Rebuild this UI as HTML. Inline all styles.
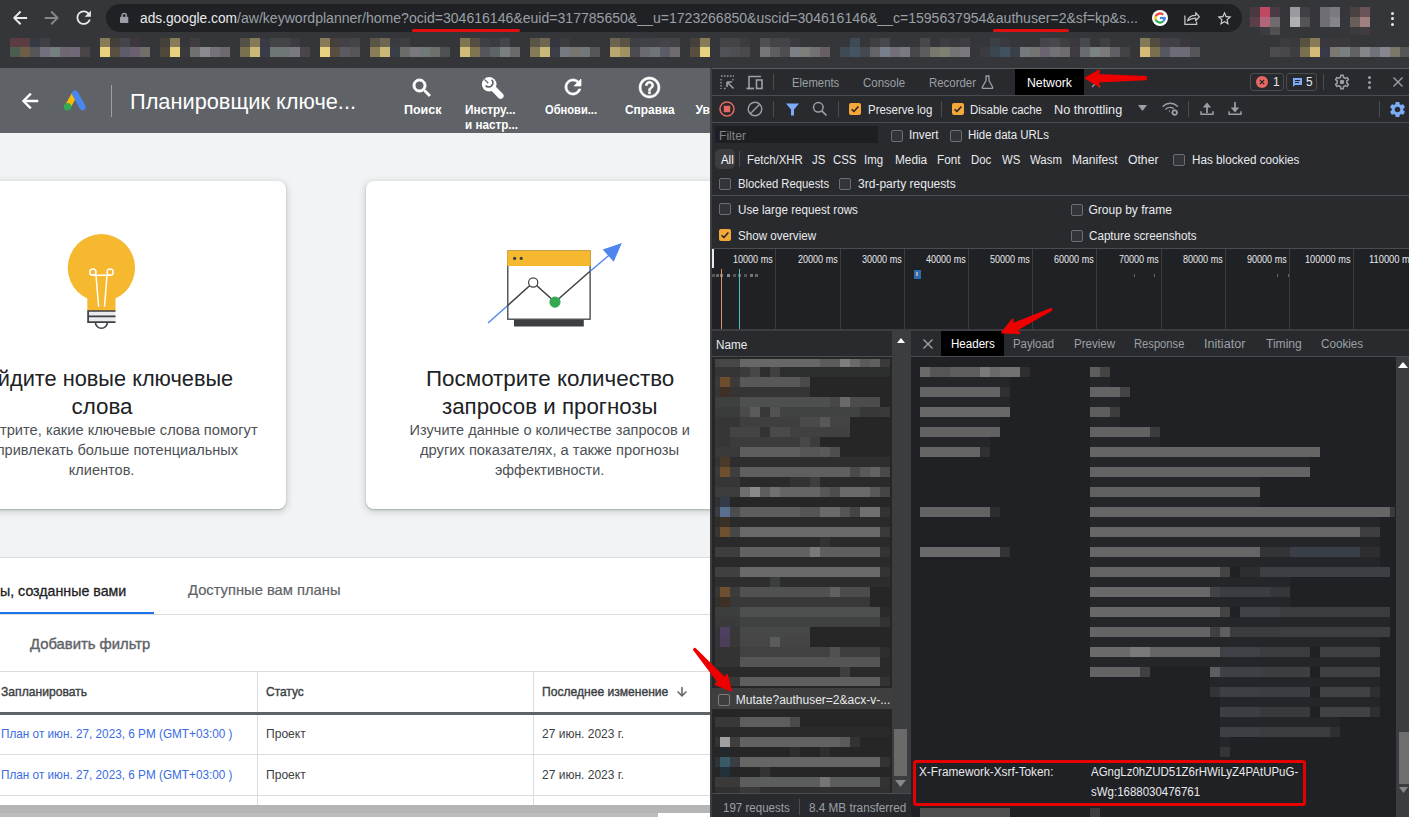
<!DOCTYPE html>
<html><head><meta charset="utf-8"><style>
*{margin:0;padding:0;box-sizing:border-box}
html,body{width:1409px;height:817px;overflow:hidden;background:#35363a;font-family:"Liberation Sans",sans-serif}
.a{position:absolute}
.t{position:absolute;white-space:nowrap;line-height:1;transform-origin:0 0}
</style></head><body>
<div class="a" style="left:0px;top:0px;width:1409px;height:68px;background:#35363a;"></div>
<div class="a" style="left:106px;top:4px;width:1136px;height:28px;background:#202124;border-radius:14px;"></div>
<svg class="a" style="left:12px;top:10px;" width="16" height="16" viewBox="0 0 16 16"><path d="M2.2 7.9H15.1M8.6 1.5L2.2 7.9L8.6 14.3" fill="none" stroke="#e8eaed" stroke-width="2" stroke-linejoin="round"/></svg>
<svg class="a" style="left:44px;top:10px;" width="16" height="16" viewBox="0 0 16 16"><path d="M0.7 7.9H13.6M7.2 1.5L13.6 7.9L7.2 14.3" fill="none" stroke="#85888b" stroke-width="2" stroke-linejoin="round"/></svg>
<svg class="a" style="left:73.4px;top:7.4px;" width="21.45" height="21.45" viewBox="0 0 24 24"><path fill="#e8eaed" d="M17.65 6.35C16.2 4.9 14.21 4 12 4c-4.42 0-7.99 3.58-7.99 8s3.57 8 7.99 8c3.73 0 6.84-2.55 7.73-6h-2.08c-.82 2.33-3.04 4-5.65 4-3.31 0-6-2.69-6-6s2.69-6 6-6c1.66 0 3.14.69 4.22 1.78L13 11h7V4l-2.35 2.35z"/></svg>
<svg class="a" style="left:120px;top:12px;" width="9" height="11" viewBox="0 0 9 11"><path d="M2 5.2V3.6a2.15 2.15 0 0 1 4.3 0V5.2" fill="none" stroke="#9aa0a6" stroke-width="1.5"/><rect x="0" y="4.8" width="8.3" height="6.2" rx="0.8" fill="#9aa0a6"/></svg>
<div class="t" style="left:140.00px;transform:scaleX(0.9813);top:11.10px;font-size:14px;color:#e8eaed;font-weight:normal;">ads.google.com</div>
<div class="t" style="left:237.00px;transform:scaleX(1.0043);top:11.10px;font-size:14px;color:#9aa0a6;font-weight:normal;">/aw/keywordplanner/home?ocid=304616146&amp;euid=317785650&amp;__u=1723266850&amp;uscid=304616146&amp;__c=1595637954&amp;authuser=2&amp;sf=kp&amp;s...</div>
<div class="a" style="left:412px;top:29px;width:108px;height:3px;background:#e01010;border-radius:1.5px;"></div>
<div class="a" style="left:993px;top:29px;width:76px;height:3px;background:#e01010;border-radius:1.5px;"></div>
<svg class="a" style="left:1152px;top:10px;" width="16" height="16" viewBox="0 0 16 16"><circle cx="8" cy="8" r="8" fill="#fff"/><g fill="none" stroke-width="2.3"><path d="M11.25 4.75A4.6 4.6 0 0 0 3.68 6.43" stroke="#ea4335"/><path d="M3.68 6.43A4.6 4.6 0 0 0 3.68 9.57" stroke="#fbbc05"/><path d="M3.68 9.57A4.6 4.6 0 0 0 11.25 11.25" stroke="#34a853"/><path d="M11.25 11.25A4.6 4.6 0 0 0 12.6 8" stroke="#4285f4"/><path d="M8 8H13.7" stroke="#4285f4"/></g></svg>
<svg class="a" style="left:1184px;top:9.5px;" width="16.2" height="15.3" viewBox="0 0 18 17"><path d="M1 6v10h13v-3" fill="none" stroke="#c4c7c5" stroke-width="1.4"/><path d="M4 12c1-4 4-6 9-6V3l4 4.5-4 4.5V9c-4 0-6.5 1-9 3z" fill="none" stroke="#c4c7c5" stroke-width="1.4" stroke-linejoin="round"/></svg>
<svg class="a" style="left:1215.6px;top:9.7px;" width="17" height="17" viewBox="0 0 24 24"><path fill="#d0d3d6" d="M22 9.24l-7.19-.62L12 2 9.19 8.63 2 9.24l5.46 4.73L5.82 21 12 17.27 18.18 21l-1.63-7.03L22 9.24zM12 15.4l-3.76 2.27 1-4.28-3.32-2.88 4.38-.38L12 6.1l1.71 4.04 4.38.38-3.32 2.88 1 4.28L12 15.4z"/></svg>
<div class="a" style="left:1250px;top:7px;width:10px;height:10px;background:#4a3a40;"></div>
<div class="a" style="left:1260px;top:7px;width:10px;height:10px;background:#c04862;"></div>
<div class="a" style="left:1270px;top:7px;width:10px;height:10px;background:#4a3a44;"></div>
<div class="a" style="left:1290px;top:7px;width:10px;height:10px;background:#9a9aa0;"></div>
<div class="a" style="left:1300px;top:7px;width:10px;height:10px;background:#404044;"></div>
<div class="a" style="left:1320px;top:7px;width:10px;height:10px;background:#6e6e74;"></div>
<div class="a" style="left:1330px;top:7px;width:10px;height:10px;background:#7a7a80;"></div>
<div class="a" style="left:1350px;top:7px;width:10px;height:10px;background:#4a4240;"></div>
<div class="a" style="left:1360px;top:7px;width:10px;height:10px;background:#6a5458;"></div>
<div class="a" style="left:1250px;top:17px;width:10px;height:10px;background:#5a3e48;"></div>
<div class="a" style="left:1260px;top:17px;width:10px;height:10px;background:#b06678;"></div>
<div class="a" style="left:1270px;top:17px;width:10px;height:10px;background:#706a6e;"></div>
<div class="a" style="left:1290px;top:17px;width:10px;height:10px;background:#b0b0b4;"></div>
<div class="a" style="left:1300px;top:17px;width:10px;height:10px;background:#545458;"></div>
<div class="a" style="left:1320px;top:17px;width:10px;height:10px;background:#6e6e74;"></div>
<div class="a" style="left:1330px;top:17px;width:10px;height:10px;background:#84848a;"></div>
<div class="a" style="left:1350px;top:17px;width:10px;height:10px;background:#6a5e5a;"></div>
<div class="a" style="left:1360px;top:17px;width:10px;height:10px;background:#a08080;"></div>
<div class="a" style="left:1260px;top:27px;width:10px;height:8px;background:#3c3c40;"></div>
<div class="a" style="left:1270px;top:27px;width:10px;height:8px;background:#505052;"></div>
<div class="a" style="left:1350px;top:27px;width:10px;height:8px;background:#3c3a3c;"></div>
<div class="a" style="left:1360px;top:27px;width:10px;height:8px;background:#403c40;"></div>
<div class="a" style="left:1390.5px;top:11.5px;width:3px;height:3px;background:#e8eaed;border-radius:50%;"></div>
<div class="a" style="left:1390.5px;top:17.0px;width:3px;height:3px;background:#e8eaed;border-radius:50%;"></div>
<div class="a" style="left:1390.5px;top:22.5px;width:3px;height:3px;background:#e8eaed;border-radius:50%;"></div>
<div class="a" style="left:10px;top:38px;width:10px;height:9px;background:#5a3c42;"></div>
<div class="a" style="left:20px;top:38px;width:10px;height:9px;background:#5a3c42;"></div>
<div class="a" style="left:30px;top:38px;width:10px;height:9px;background:#343a44;"></div>
<div class="a" style="left:40px;top:38px;width:10px;height:9px;background:#404044;"></div>
<div class="a" style="left:100px;top:38px;width:10px;height:9px;background:#887c58;"></div>
<div class="a" style="left:110px;top:38px;width:10px;height:9px;background:#443f38;"></div>
<div class="a" style="left:120px;top:38px;width:10px;height:9px;background:#44454a;"></div>
<div class="a" style="left:130px;top:38px;width:10px;height:9px;background:#3e383e;"></div>
<div class="a" style="left:160px;top:38px;width:10px;height:9px;background:#45413a;"></div>
<div class="a" style="left:170px;top:38px;width:10px;height:9px;background:#887c58;"></div>
<div class="a" style="left:190px;top:38px;width:10px;height:9px;background:#403d42;"></div>
<div class="a" style="left:240px;top:38px;width:10px;height:9px;background:#535045;"></div>
<div class="a" style="left:250px;top:38px;width:10px;height:9px;background:#857a58;"></div>
<div class="a" style="left:260px;top:38px;width:10px;height:9px;background:#383a44;"></div>
<div class="a" style="left:270px;top:38px;width:10px;height:9px;background:#434448;"></div>
<div class="a" style="left:280px;top:38px;width:10px;height:9px;background:#434448;"></div>
<div class="a" style="left:290px;top:38px;width:10px;height:9px;background:#3e3c40;"></div>
<div class="a" style="left:320px;top:38px;width:10px;height:9px;background:#887c58;"></div>
<div class="a" style="left:330px;top:38px;width:10px;height:9px;background:#45413a;"></div>
<div class="a" style="left:340px;top:38px;width:10px;height:9px;background:#404046;"></div>
<div class="a" style="left:350px;top:38px;width:10px;height:9px;background:#444448;"></div>
<div class="a" style="left:370px;top:38px;width:10px;height:9px;background:#5a5444;"></div>
<div class="a" style="left:380px;top:38px;width:10px;height:9px;background:#6e6650;"></div>
<div class="a" style="left:390px;top:38px;width:10px;height:9px;background:#3a3b40;"></div>
<div class="a" style="left:400px;top:38px;width:10px;height:9px;background:#3e3e40;"></div>
<div class="a" style="left:460px;top:38px;width:10px;height:9px;background:#807550;"></div>
<div class="a" style="left:470px;top:38px;width:10px;height:9px;background:#544e40;"></div>
<div class="a" style="left:480px;top:38px;width:10px;height:9px;background:#3e3f44;"></div>
<div class="a" style="left:490px;top:38px;width:10px;height:9px;background:#3a3b40;"></div>
<div class="a" style="left:500px;top:38px;width:10px;height:9px;background:#444549;"></div>
<div class="a" style="left:530px;top:38px;width:10px;height:9px;background:#5a5444;"></div>
<div class="a" style="left:540px;top:38px;width:10px;height:9px;background:#6e6650;"></div>
<div class="a" style="left:550px;top:38px;width:10px;height:9px;background:#35363f;"></div>
<div class="a" style="left:560px;top:38px;width:10px;height:9px;background:#3c3b40;"></div>
<div class="a" style="left:610px;top:38px;width:10px;height:9px;background:#6a6450;"></div>
<div class="a" style="left:620px;top:38px;width:10px;height:9px;background:#5a5444;"></div>
<div class="a" style="left:630px;top:38px;width:10px;height:9px;background:#3e3f44;"></div>
<div class="a" style="left:640px;top:38px;width:10px;height:9px;background:#404146;"></div>
<div class="a" style="left:650px;top:38px;width:10px;height:9px;background:#3e4146;"></div>
<div class="a" style="left:660px;top:38px;width:10px;height:9px;background:#444448;"></div>
<div class="a" style="left:670px;top:38px;width:10px;height:9px;background:#434346;"></div>
<div class="a" style="left:690px;top:38px;width:10px;height:9px;background:#45413a;"></div>
<div class="a" style="left:700px;top:38px;width:10px;height:9px;background:#887c58;"></div>
<div class="a" style="left:720px;top:38px;width:10px;height:9px;background:#444448;"></div>
<div class="a" style="left:730px;top:38px;width:10px;height:9px;background:#444448;"></div>
<div class="a" style="left:740px;top:38px;width:10px;height:9px;background:#3c3c3e;"></div>
<div class="a" style="left:760px;top:38px;width:10px;height:9px;background:#505054;"></div>
<div class="a" style="left:770px;top:38px;width:10px;height:9px;background:#444448;"></div>
<div class="a" style="left:780px;top:38px;width:10px;height:9px;background:#444448;"></div>
<div class="a" style="left:790px;top:38px;width:10px;height:9px;background:#3c3c40;"></div>
<div class="a" style="left:850px;top:38px;width:10px;height:9px;background:#3e4a54;"></div>
<div class="a" style="left:870px;top:38px;width:10px;height:9px;background:#404044;"></div>
<div class="a" style="left:880px;top:38px;width:10px;height:9px;background:#46484c;"></div>
<div class="a" style="left:920px;top:38px;width:10px;height:9px;background:#48484c;"></div>
<div class="a" style="left:940px;top:38px;width:10px;height:9px;background:#3e3e42;"></div>
<div class="a" style="left:950px;top:38px;width:10px;height:9px;background:#3a3a3e;"></div>
<div class="a" style="left:960px;top:38px;width:10px;height:9px;background:#3e3e42;"></div>
<div class="a" style="left:990px;top:38px;width:10px;height:9px;background:#3a4048;"></div>
<div class="a" style="left:1000px;top:38px;width:10px;height:9px;background:#383a40;"></div>
<div class="a" style="left:1040px;top:38px;width:10px;height:9px;background:#44444a;"></div>
<div class="a" style="left:1050px;top:38px;width:10px;height:9px;background:#48484c;"></div>
<div class="a" style="left:1060px;top:38px;width:10px;height:9px;background:#3e3e42;"></div>
<div class="a" style="left:1070px;top:38px;width:10px;height:9px;background:#3a383c;"></div>
<div class="a" style="left:1080px;top:38px;width:10px;height:9px;background:#48494e;"></div>
<div class="a" style="left:1100px;top:38px;width:10px;height:9px;background:#404044;"></div>
<div class="a" style="left:1140px;top:38px;width:10px;height:9px;background:#857a58;"></div>
<div class="a" style="left:1150px;top:38px;width:10px;height:9px;background:#524c40;"></div>
<div class="a" style="left:1160px;top:38px;width:10px;height:9px;background:#404046;"></div>
<div class="a" style="left:1170px;top:38px;width:10px;height:9px;background:#404046;"></div>
<div class="a" style="left:1180px;top:38px;width:10px;height:9px;background:#3a383c;"></div>
<div class="a" style="left:1280px;top:38px;width:10px;height:9px;background:#3c3c40;"></div>
<div class="a" style="left:1290px;top:38px;width:10px;height:9px;background:#3a3a3e;"></div>
<div class="a" style="left:1300px;top:38px;width:10px;height:9px;background:#58523f;"></div>
<div class="a" style="left:1310px;top:38px;width:10px;height:9px;background:#887c58;"></div>
<div class="a" style="left:1320px;top:38px;width:10px;height:9px;background:#38383e;"></div>
<div class="a" style="left:1330px;top:38px;width:10px;height:9px;background:#3a383c;"></div>
<div class="a" style="left:1340px;top:38px;width:10px;height:9px;background:#3a383c;"></div>
<div class="a" style="left:10px;top:47px;width:10px;height:10px;background:#4a5e50;"></div>
<div class="a" style="left:20px;top:47px;width:10px;height:10px;background:#6e5e46;"></div>
<div class="a" style="left:30px;top:47px;width:10px;height:10px;background:#555558;"></div>
<div class="a" style="left:40px;top:47px;width:10px;height:10px;background:#72707c;"></div>
<div class="a" style="left:50px;top:47px;width:10px;height:10px;background:#748080;"></div>
<div class="a" style="left:60px;top:47px;width:10px;height:10px;background:#6e6670;"></div>
<div class="a" style="left:70px;top:47px;width:10px;height:10px;background:#706878;"></div>
<div class="a" style="left:80px;top:47px;width:10px;height:10px;background:#4a4446;"></div>
<div class="a" style="left:100px;top:47px;width:10px;height:10px;background:#e8d282;"></div>
<div class="a" style="left:110px;top:47px;width:10px;height:10px;background:#5a5040;"></div>
<div class="a" style="left:120px;top:47px;width:10px;height:10px;background:#5c5c6a;"></div>
<div class="a" style="left:130px;top:47px;width:10px;height:10px;background:#6a6070;"></div>
<div class="a" style="left:140px;top:47px;width:10px;height:10px;background:#707068;"></div>
<div class="a" style="left:160px;top:47px;width:10px;height:10px;background:#504838;"></div>
<div class="a" style="left:170px;top:47px;width:10px;height:10px;background:#e8d282;"></div>
<div class="a" style="left:180px;top:47px;width:10px;height:10px;background:#3a3a3c;"></div>
<div class="a" style="left:190px;top:47px;width:10px;height:10px;background:#707070;"></div>
<div class="a" style="left:200px;top:47px;width:10px;height:10px;background:#8a8a90;"></div>
<div class="a" style="left:210px;top:47px;width:10px;height:10px;background:#757378;"></div>
<div class="a" style="left:220px;top:47px;width:10px;height:10px;background:#6c6a6e;"></div>
<div class="a" style="left:240px;top:47px;width:10px;height:10px;background:#7a7050;"></div>
<div class="a" style="left:250px;top:47px;width:10px;height:10px;background:#c9b878;"></div>
<div class="a" style="left:260px;top:47px;width:10px;height:10px;background:#3a3c4a;"></div>
<div class="a" style="left:270px;top:47px;width:10px;height:10px;background:#6e7678;"></div>
<div class="a" style="left:280px;top:47px;width:10px;height:10px;background:#6e7678;"></div>
<div class="a" style="left:290px;top:47px;width:10px;height:10px;background:#7c7880;"></div>
<div class="a" style="left:300px;top:47px;width:10px;height:10px;background:#48464a;"></div>
<div class="a" style="left:320px;top:47px;width:10px;height:10px;background:#e8d282;"></div>
<div class="a" style="left:330px;top:47px;width:10px;height:10px;background:#584e40;"></div>
<div class="a" style="left:340px;top:47px;width:10px;height:10px;background:#5a5a60;"></div>
<div class="a" style="left:350px;top:47px;width:10px;height:10px;background:#555558;"></div>
<div class="a" style="left:370px;top:47px;width:10px;height:10px;background:#8a7d58;"></div>
<div class="a" style="left:380px;top:47px;width:10px;height:10px;background:#c9b878;"></div>
<div class="a" style="left:390px;top:47px;width:10px;height:10px;background:#3a3e48;"></div>
<div class="a" style="left:400px;top:47px;width:10px;height:10px;background:#6c6b6a;"></div>
<div class="a" style="left:410px;top:47px;width:10px;height:10px;background:#78787e;"></div>
<div class="a" style="left:420px;top:47px;width:10px;height:10px;background:#707878;"></div>
<div class="a" style="left:430px;top:47px;width:10px;height:10px;background:#6e706e;"></div>
<div class="a" style="left:440px;top:47px;width:10px;height:10px;background:#4e5052;"></div>
<div class="a" style="left:460px;top:47px;width:10px;height:10px;background:#d0bc78;"></div>
<div class="a" style="left:470px;top:47px;width:10px;height:10px;background:#807450;"></div>
<div class="a" style="left:480px;top:47px;width:10px;height:10px;background:#55555a;"></div>
<div class="a" style="left:490px;top:47px;width:10px;height:10px;background:#5c6468;"></div>
<div class="a" style="left:500px;top:47px;width:10px;height:10px;background:#7a7e80;"></div>
<div class="a" style="left:510px;top:47px;width:10px;height:10px;background:#6a6a6a;"></div>
<div class="a" style="left:530px;top:47px;width:10px;height:10px;background:#857a58;"></div>
<div class="a" style="left:540px;top:47px;width:10px;height:10px;background:#c9b878;"></div>
<div class="a" style="left:550px;top:47px;width:10px;height:10px;background:#3c3f48;"></div>
<div class="a" style="left:560px;top:47px;width:10px;height:10px;background:#747a80;"></div>
<div class="a" style="left:570px;top:47px;width:10px;height:10px;background:#787470;"></div>
<div class="a" style="left:580px;top:47px;width:10px;height:10px;background:#70787a;"></div>
<div class="a" style="left:590px;top:47px;width:10px;height:10px;background:#555558;"></div>
<div class="a" style="left:610px;top:47px;width:10px;height:10px;background:#b8a870;"></div>
<div class="a" style="left:620px;top:47px;width:10px;height:10px;background:#a09260;"></div>
<div class="a" style="left:630px;top:47px;width:10px;height:10px;background:#4c4c50;"></div>
<div class="a" style="left:640px;top:47px;width:10px;height:10px;background:#6a6a70;"></div>
<div class="a" style="left:650px;top:47px;width:10px;height:10px;background:#6e7478;"></div>
<div class="a" style="left:660px;top:47px;width:10px;height:10px;background:#5c5c66;"></div>
<div class="a" style="left:670px;top:47px;width:10px;height:10px;background:#6e6c70;"></div>
<div class="a" style="left:690px;top:47px;width:10px;height:10px;background:#584e40;"></div>
<div class="a" style="left:700px;top:47px;width:10px;height:10px;background:#e8d282;"></div>
<div class="a" style="left:720px;top:47px;width:10px;height:10px;background:#505256;"></div>
<div class="a" style="left:730px;top:47px;width:10px;height:10px;background:#4c4e54;"></div>
<div class="a" style="left:740px;top:47px;width:10px;height:10px;background:#4a4a4c;"></div>
<div class="a" style="left:760px;top:47px;width:10px;height:10px;background:#76767a;"></div>
<div class="a" style="left:770px;top:47px;width:10px;height:10px;background:#5e5e62;"></div>
<div class="a" style="left:780px;top:47px;width:10px;height:10px;background:#4e4e52;"></div>
<div class="a" style="left:790px;top:47px;width:10px;height:10px;background:#7a8086;"></div>
<div class="a" style="left:800px;top:47px;width:10px;height:10px;background:#7e7e78;"></div>
<div class="a" style="left:810px;top:47px;width:10px;height:10px;background:#727276;"></div>
<div class="a" style="left:820px;top:47px;width:10px;height:10px;background:#6a5e66;"></div>
<div class="a" style="left:840px;top:47px;width:10px;height:10px;background:#3e4a54;"></div>
<div class="a" style="left:850px;top:47px;width:10px;height:10px;background:#445464;"></div>
<div class="a" style="left:860px;top:47px;width:10px;height:10px;background:#444a50;"></div>
<div class="a" style="left:870px;top:47px;width:10px;height:10px;background:#646466;"></div>
<div class="a" style="left:880px;top:47px;width:10px;height:10px;background:#76808a;"></div>
<div class="a" style="left:890px;top:47px;width:10px;height:10px;background:#746e7a;"></div>
<div class="a" style="left:900px;top:47px;width:10px;height:10px;background:#7a7880;"></div>
<div class="a" style="left:910px;top:47px;width:10px;height:10px;background:#48484c;"></div>
<div class="a" style="left:920px;top:47px;width:10px;height:10px;background:#5a5c60;"></div>
<div class="a" style="left:930px;top:47px;width:10px;height:10px;background:#78786c;"></div>
<div class="a" style="left:940px;top:47px;width:10px;height:10px;background:#808070;"></div>
<div class="a" style="left:950px;top:47px;width:10px;height:10px;background:#747474;"></div>
<div class="a" style="left:960px;top:47px;width:10px;height:10px;background:#78787e;"></div>
<div class="a" style="left:980px;top:47px;width:10px;height:10px;background:#3c3c40;"></div>
<div class="a" style="left:990px;top:47px;width:10px;height:10px;background:#3a4650;"></div>
<div class="a" style="left:1000px;top:47px;width:10px;height:10px;background:#405260;"></div>
<div class="a" style="left:1010px;top:47px;width:10px;height:10px;background:#3a4048;"></div>
<div class="a" style="left:1020px;top:47px;width:10px;height:10px;background:#747a7e;"></div>
<div class="a" style="left:1030px;top:47px;width:10px;height:10px;background:#747470;"></div>
<div class="a" style="left:1040px;top:47px;width:10px;height:10px;background:#6a6470;"></div>
<div class="a" style="left:1050px;top:47px;width:10px;height:10px;background:#727276;"></div>
<div class="a" style="left:1060px;top:47px;width:10px;height:10px;background:#6e6c70;"></div>
<div class="a" style="left:1070px;top:47px;width:10px;height:10px;background:#3e3c40;"></div>
<div class="a" style="left:1080px;top:47px;width:10px;height:10px;background:#686c70;"></div>
<div class="a" style="left:1090px;top:47px;width:10px;height:10px;background:#7a8282;"></div>
<div class="a" style="left:1100px;top:47px;width:10px;height:10px;background:#7a7a7a;"></div>
<div class="a" style="left:1110px;top:47px;width:10px;height:10px;background:#5e6064;"></div>
<div class="a" style="left:1120px;top:47px;width:10px;height:10px;background:#434246;"></div>
<div class="a" style="left:1140px;top:47px;width:10px;height:10px;background:#d4bc78;"></div>
<div class="a" style="left:1150px;top:47px;width:10px;height:10px;background:#7a7050;"></div>
<div class="a" style="left:1160px;top:47px;width:10px;height:10px;background:#545860;"></div>
<div class="a" style="left:1170px;top:47px;width:10px;height:10px;background:#6e6a78;"></div>
<div class="a" style="left:1180px;top:47px;width:10px;height:10px;background:#6e6a76;"></div>
<div class="a" style="left:1190px;top:47px;width:10px;height:10px;background:#555558;"></div>
<div class="a" style="left:1270px;top:47px;width:10px;height:10px;background:#4c4c50;"></div>
<div class="a" style="left:1280px;top:47px;width:10px;height:10px;background:#48484c;"></div>
<div class="a" style="left:1290px;top:47px;width:10px;height:10px;background:#3e3e42;"></div>
<div class="a" style="left:1300px;top:47px;width:10px;height:10px;background:#7a7050;"></div>
<div class="a" style="left:1310px;top:47px;width:10px;height:10px;background:#d4bc78;"></div>
<div class="a" style="left:1320px;top:47px;width:10px;height:10px;background:#383a48;"></div>
<div class="a" style="left:1330px;top:47px;width:10px;height:10px;background:#7a7a70;"></div>
<div class="a" style="left:1340px;top:47px;width:10px;height:10px;background:#788080;"></div>
<div class="a" style="left:1350px;top:47px;width:10px;height:10px;background:#626264;"></div>
<div class="a" style="left:1360px;top:47px;width:10px;height:10px;background:#848688;"></div>
<div class="a" style="left:1370px;top:47px;width:10px;height:10px;background:#70747a;"></div>
<div class="a" style="left:1380px;top:47px;width:10px;height:10px;background:#88868e;"></div>
<div class="a" style="left:1390px;top:47px;width:10px;height:10px;background:#7a7868;"></div>
<div class="a" style="left:1400px;top:47px;width:10px;height:10px;background:#555558;"></div>
<div class="a" style="left:0px;top:68px;width:711px;height:749px;background:#f1f3f4;"></div>
<div class="a" style="left:0px;top:68px;width:711px;height:65px;background:#5f6368;"></div>
<svg class="a" style="left:18px;top:89px;" width="24" height="24" viewBox="0 0 24 24"><path fill="#fff" stroke="#fff" stroke-width="0.5" d="M20 11H7.83l5.59-5.59L12 4l-8 8 8 8 1.41-1.41L7.83 13H20v-2z"/></svg>
<svg class="a" style="left:55px;top:82px;" width="40" height="36" viewBox="0 0 40 36"><path d="M12.55 24.75 L20.1 11.6" stroke="#fbbc04" stroke-width="6"/><path d="M20.1 11.6 L27.6 25.1" stroke="#4a86ee" stroke-width="6.3" stroke-linecap="round"/><circle cx="12.55" cy="24.75" r="3.7" fill="#34a853"/></svg>
<div class="a" style="left:111px;top:85px;width:1px;height:32px;background:#9aa0a6;"></div>
<div class="t" style="left:129.50px;transform:scaleX(0.9896);top:90.50px;font-size:22px;color:#ffffff;font-weight:normal;">Планировщик ключе...</div>
<svg class="a" style="left:410px;top:76px;" width="24" height="24" viewBox="0 0 24 24"><path fill="#fff" stroke="#fff" stroke-width="0.9" d="M15.5 14h-.79l-.28-.27C15.41 12.59 16 11.11 16 9.5 16 5.91 13.09 3 9.5 3S3 5.91 3 9.5 5.91 16 9.5 16c1.61 0 3.09-.59 4.23-1.57l.27.28v.79l5 4.99L20.49 19l-4.99-5zm-6 0C7.01 14 5 11.99 5 9.5S7.01 5 9.5 5 14 7.01 14 9.5 11.99 14 9.5 14z"/></svg>
<div class="t" style="left:403.50px;transform:scaleX(1.0412);top:103.80px;font-size:12px;color:#ffffff;font-weight:bold;">Поиск</div>
<svg class="a" style="left:470px;top:70.8px;" width="50" height="32" viewBox="0 0 50 32"><circle cx="19.2" cy="13.3" r="7.3" fill="#fff"/><path d="M19 13L30.6 24.8" stroke="#fff" stroke-width="6" stroke-linecap="round"/><path d="M14.4 8.4L18.3 12.3" stroke="#5f6368" stroke-width="1.3"/><path d="M15.6 14.6A4.2 4.2 0 0 0 21.8 8.8" fill="none" stroke="#5f6368" stroke-width="1.7"/></svg>
<div class="t" style="left:464.50px;transform:scaleX(0.9860);top:103.80px;font-size:12px;color:#ffffff;font-weight:bold;">Инстру...</div>
<div class="t" style="left:464.50px;transform:scaleX(0.9722);top:118.80px;font-size:12px;color:#ffffff;font-weight:bold;">и настр...</div>
<svg class="a" style="left:561px;top:75px;" width="24" height="24" viewBox="0 0 24 24"><path fill="#fff" stroke="#fff" stroke-width="0.7" d="M17.65 6.35C16.2 4.9 14.21 4 12 4c-4.42 0-7.99 3.58-7.99 8s3.57 8 7.99 8c3.73 0 6.84-2.55 7.73-6h-2.08c-.82 2.33-3.04 4-5.65 4-3.31 0-6-2.69-6-6s2.69-6 6-6c1.66 0 3.14.69 4.22 1.78L13 11h7V4l-2.35 2.35z"/></svg>
<div class="t" style="left:545.00px;transform:scaleX(0.9270);top:103.80px;font-size:12px;color:#ffffff;font-weight:bold;">Обнови...</div>
<svg class="a" style="left:637px;top:75px;" width="25" height="25" viewBox="0 0 24 24"><path fill="#fff" stroke="#fff" stroke-width="0.6" d="M11 18h2v-2h-2v2zm1-16C6.48 2 2 6.48 2 12s4.48 10 10 10 10-4.48 10-10S17.52 2 12 2zm0 18c-4.41 0-8-3.59-8-8s3.59-8 8-8 8 3.59 8 8-3.59 8-8 8zm0-14c-2.21 0-4 1.79-4 4h2c0-1.1.9-2 2-2s2 .9 2 2c0 2-3 1.75-3 5h2c0-2.25 3-2.5 3-5 0-2.21-1.79-4-4-4z"/></svg>
<div class="t" style="left:624.50px;transform:scaleX(0.9903);top:103.80px;font-size:12px;color:#ffffff;font-weight:bold;">Справка</div>
<div class="t" style="left:695.5px;top:103.80px;font-size:12px;color:#ffffff;font-weight:bold;">Ув</div>
<div class="a" style="left:-30px;top:181px;width:316px;height:328px;background:#fff;border-radius:8px;box-shadow:0 1px 2px 0 rgba(60,64,67,.3),0 2px 6px 2px rgba(60,64,67,.15);"></div>
<div class="a" style="left:366px;top:181px;width:400px;height:328px;background:#fff;border-radius:8px;box-shadow:0 1px 2px 0 rgba(60,64,67,.3),0 2px 6px 2px rgba(60,64,67,.15);"></div>
<svg class="a" style="left:61px;top:228px;" width="82" height="102" viewBox="0 0 82 102"><circle cx="40.4" cy="39.8" r="33.7" fill="#f5b82e"/><rect x="26.3" y="62" width="28.2" height="21" fill="#f5b82e"/><path d="M34.4 94.3a6 6 0 0 0 12 0" fill="none" stroke="#3c4043" stroke-width="1.6"/><rect x="27.1" y="83" width="27.4" height="10.5" fill="#e8eaed"/><path d="M27.1 82.4V94.1H54.5M26.3 83H54.5M27.1 88.3H54.5" fill="none" stroke="#3c4043" stroke-width="1.7"/><g fill="none" stroke="#fff" stroke-width="1.5"><circle cx="31.9" cy="44.2" r="3.1"/><circle cx="49.1" cy="44.2" r="3.1"/><path d="M31.9 47.3H49.1M35 47.3L37.6 78.8M46 47.3L43.5 78.8"/></g></svg>
<svg class="a" style="left:480px;top:236px;" width="150" height="100" viewBox="0 0 150 100"><path d="M8 87.1L27.5 69.7" stroke="#4f86ee" stroke-width="1.4"/><path d="M141.9 7.1L122.7 13.5L133.7 25.7Z" fill="#4f86ee"/><rect x="27.8" y="15" width="82.3" height="68.2" fill="#fff" stroke="#3c4043" stroke-width="1.3"/><rect x="27.2" y="14.4" width="83.5" height="15.6" fill="#f5b82e"/><circle cx="34.6" cy="22.4" r="1.6" fill="#3c4043"/><circle cx="41.2" cy="22.4" r="1.6" fill="#3c4043"/><rect x="34" y="83.8" width="69.8" height="6.7" fill="#3c4043"/><path d="M27.5 69.7L53.2 46.5L75 66.1L110 35.3" fill="none" stroke="#3c4043" stroke-width="1.4"/><path d="M110.2 35.3L129 19.2" stroke="#4f86ee" stroke-width="1.4"/><circle cx="53.2" cy="46.5" r="4.6" fill="#fff" stroke="#3c4043" stroke-width="1.2"/><circle cx="75" cy="66.1" r="5.6" fill="#34a853"/></svg>
<div class="t" style="left:-29.60px;transform:scaleX(0.9718);top:367.56px;font-size:22.4px;color:#202124;font-weight:normal;">Найдите новые ключевые</div>
<div class="t" style="left:71.47px;top:395.86px;font-size:22.4px;color:#202124;font-weight:normal;">слова</div>
<div class="t" style="left:0.00px;transform:scaleX(1.0080);top:423.23px;font-size:14.55px;color:#4d5156;font-weight:normal;">трите, какие ключевые слова помогут</div>
<div class="t" style="left:-3.34px;top:443.43px;font-size:14.55px;color:#4d5156;font-weight:normal;">привлекать больше потенциальных</div>
<div class="t" style="left:68.79px;top:462.63px;font-size:14.55px;color:#4d5156;font-weight:normal;">клиентов.</div>
<div class="t" style="left:426.00px;top:367.56px;font-size:22.4px;color:#202124;font-weight:normal;">Посмотрите количество</div>
<div class="t" style="left:442.00px;transform:scaleX(0.9953);top:395.86px;font-size:22.4px;color:#202124;font-weight:normal;">запросов и прогнозы</div>
<div class="t" style="left:409.60px;top:423.23px;font-size:14.55px;color:#4d5156;font-weight:normal;">Изучите данные о количестве запросов и</div>
<div class="t" style="left:420.20px;transform:scaleX(1.0094);top:443.43px;font-size:14.55px;color:#4d5156;font-weight:normal;">других показателях, а также прогнозы</div>
<div class="t" style="left:495.20px;transform:scaleX(0.9861);top:462.63px;font-size:14.55px;color:#4d5156;font-weight:normal;">эффективности.</div>
<div class="a" style="left:0px;top:557px;width:711px;height:260px;background:#fff;"></div>
<div class="a" style="left:0px;top:557px;width:711px;height:1px;background:#dadce0;"></div>
<div class="t" style="left:0.00px;transform:scaleX(0.9475);top:582.75px;font-size:15px;color:#202124;font-weight:normal;-webkit-text-stroke:0.3px #202124;">ы, созданные вами</div>
<div class="t" style="left:187.80px;transform:scaleX(1.0157);top:583.17px;font-size:14.5px;color:#5f6368;font-weight:normal;-webkit-text-stroke:0.2px #5f6368;">Доступные вам планы</div>
<div class="a" style="left:0px;top:614px;width:711px;height:1px;background:#dadce0;"></div>
<div class="a" style="left:0px;top:612px;width:154px;height:2px;background:#1a73e8;"></div>
<div class="t" style="left:29.90px;transform:scaleX(0.9877);top:635.95px;font-size:15px;color:#5f6368;font-weight:normal;-webkit-text-stroke:0.4px #5f6368;">Добавить фильтр</div>
<div class="a" style="left:0px;top:671px;width:711px;height:1px;background:#dadce0;"></div>
<div class="t" style="left:0.80px;transform:scaleX(0.9330);top:685.45px;font-size:13px;color:#3c4043;font-weight:normal;-webkit-text-stroke:0.4px #3c4043;">Запланировать</div>
<div class="t" style="left:266.20px;transform:scaleX(0.9195);top:685.45px;font-size:13px;color:#3c4043;font-weight:normal;-webkit-text-stroke:0.4px #3c4043;">Статус</div>
<div class="t" style="left:542.20px;transform:scaleX(0.9292);top:685.45px;font-size:13px;color:#3c4043;font-weight:normal;-webkit-text-stroke:0.4px #3c4043;">Последнее изменение</div>
<svg class="a" style="left:675px;top:685px;" width="14" height="14" viewBox="0 0 24 24"><path fill="#5f6368" stroke="#5f6368" stroke-width="0.8" d="M20 12l-1.41-1.41L13 16.17V4h-2v12.17l-5.58-5.59L4 12l8 8 8-8z"/></svg>
<div class="a" style="left:257px;top:672px;width:1px;height:133px;background:#dadce0;"></div>
<div class="a" style="left:533px;top:672px;width:1px;height:133px;background:#dadce0;"></div>
<div class="a" style="left:0px;top:712px;width:711px;height:2.5px;background:#5f6368;"></div>
<div class="t" style="left:0.80px;transform:scaleX(0.9045);top:727.35px;font-size:13px;color:#3a6ddf;font-weight:normal;">План от июн. 27, 2023, 6 PM (GMT+03:00 )</div>
<div class="t" style="left:266.20px;transform:scaleX(0.9293);top:727.35px;font-size:13px;color:#3c4043;font-weight:normal;">Проект</div>
<div class="t" style="left:542.20px;transform:scaleX(0.9235);top:727.35px;font-size:13px;color:#3c4043;font-weight:normal;">27 июн. 2023 г.</div>
<div class="a" style="left:0px;top:754px;width:711px;height:1px;background:#dadce0;"></div>
<div class="t" style="left:0.80px;transform:scaleX(0.9045);top:768.25px;font-size:13px;color:#3a6ddf;font-weight:normal;">План от июн. 27, 2023, 6 PM (GMT+03:00 )</div>
<div class="t" style="left:266.20px;transform:scaleX(0.9293);top:768.25px;font-size:13px;color:#3c4043;font-weight:normal;">Проект</div>
<div class="t" style="left:542.20px;transform:scaleX(0.9235);top:768.25px;font-size:13px;color:#3c4043;font-weight:normal;">27 июн. 2023 г.</div>
<div class="a" style="left:0px;top:795px;width:711px;height:1px;background:#dadce0;"></div>
<div class="a" style="left:0px;top:805px;width:711px;height:8px;background:#b4b5b7;"></div>
<div class="a" style="left:0px;top:813px;width:658px;height:4px;background:#bdbdbd;"></div>
<div class="a" style="left:658px;top:813px;width:53px;height:4px;background:#ffffff;"></div>
<div class="a" style="left:711px;top:68px;width:698px;height:749px;background:#202124;"></div>
<div class="a" style="left:710px;top:68px;width:2px;height:749px;background:#3c3e42;"></div>
<div class="a" style="left:712px;top:68px;width:697px;height:1px;background:#5a5d61;"></div>
<div class="a" style="left:712px;top:69px;width:697px;height:26px;background:#292a2d;"></div>
<div class="a" style="left:712px;top:95px;width:697px;height:1px;background:#494c50;"></div>
<svg class="a" style="left:720px;top:75px;" width="16" height="15" viewBox="0 0 16 15"><path d="M1 1h1.5M4 1h1.5M7 1h1.5M10 1h1.5M13 1h1M1 4v1.5M1 7v1.5M1 10v1.5M1 13v1M4 13.5h1.5M13 4v1.5" stroke="#9aa0a6" stroke-width="1.3"/><path d="M7 7L13.5 13.5M7 7h5M7 7v5" stroke="#9aa0a6" stroke-width="1.6" fill="none"/></svg>
<svg class="a" style="left:746px;top:75px;" width="18" height="15" viewBox="0 0 18 15"><path d="M3 13.5V1.5H15" fill="none" stroke="#9aa0a6" stroke-width="1.6"/><path d="M0.5 13.5H8" stroke="#9aa0a6" stroke-width="1.8"/><rect x="10.5" y="5" width="5.5" height="8.5" fill="none" stroke="#9aa0a6" stroke-width="1.6"/></svg>
<div class="a" style="left:773px;top:74px;width:1px;height:16px;background:#494c50;"></div>
<div class="t" style="left:791.90px;transform:scaleX(0.9454);top:76.80px;font-size:12px;color:#9aa0a6;font-weight:normal;">Elements</div>
<div class="t" style="left:862.60px;transform:scaleX(0.9561);top:76.80px;font-size:12px;color:#9aa0a6;font-weight:normal;">Console</div>
<div class="t" style="left:928.60px;transform:scaleX(0.9522);top:76.80px;font-size:12px;color:#9aa0a6;font-weight:normal;">Recorder</div>
<svg class="a" style="left:981px;top:75px;" width="13" height="14" viewBox="0 0 13 14"><path d="M4.5 1h4M5 1.5v4L1.3 12.2a.9.9 0 0 0 .8 1.3h8.8a.9.9 0 0 0 .8-1.3L8 5.5v-4" fill="none" stroke="#9aa0a6" stroke-width="1.3"/></svg>
<div class="a" style="left:1015px;top:69px;width:69px;height:26px;background:#000;"></div>
<div class="t" style="left:1026.70px;transform:scaleX(1.0224);top:76.80px;font-size:12px;color:#fff;font-weight:normal;">Network</div>
<svg class="a" style="left:1090px;top:77px;" width="12" height="12" viewBox="0 0 12 12"><path d="M2 10L10 2M2 2L10 10" stroke="#9aa0a6" stroke-width="1.3"/></svg>
<div class="a" style="left:1250px;top:73px;width:34px;height:18px;background:transparent;border:1px solid #4a4c50;border-radius:3px;"></div>
<svg class="a" style="left:1256px;top:76px;" width="12" height="12" viewBox="0 0 12 12"><circle cx="6" cy="6" r="6" fill="#e46962"/><path d="M3.8 3.8L8.2 8.2M8.2 3.8L3.8 8.2" stroke="#202124" stroke-width="1.2"/></svg>
<div class="t" style="left:1273.00px;transform:scaleX(0.9500);top:76.17px;font-size:12.5px;color:#e8eaed;font-weight:normal;">1</div>
<div class="a" style="left:1286px;top:73px;width:31px;height:18px;background:transparent;border:1px solid #4a4c50;border-radius:3px;"></div>
<svg class="a" style="left:1291.5px;top:76.5px;" width="11" height="11" viewBox="0 0 11 11"><path d="M1 1h9v7H3L1 10z" fill="#7cacf8"/><path d="M3 3.5h5M3 5.5h4" stroke="#202124" stroke-width="1"/></svg>
<div class="t" style="left:1305.50px;transform:scaleX(0.9500);top:76.17px;font-size:12.5px;color:#e8eaed;font-weight:normal;">5</div>
<div class="a" style="left:1323px;top:74px;width:1px;height:16px;background:#494c50;"></div>
<svg class="a" style="left:1333px;top:73px;" width="18" height="18" viewBox="0 0 24 24"><path fill="#9aa0a6" d="M19.43 12.98c.04-.32.07-.64.07-.98 0-.34-.03-.66-.07-.98l2.11-1.65c.19-.15.24-.42.12-.64l-2-3.46a.5.5 0 0 0-.61-.22l-2.49 1c-.52-.4-1.080-.73-1.69-.98l-.38-2.65A.488.488 0 0 0 14 2h-4c-.25 0-.46.18-.49.42l-.38 2.65c-.61.25-1.17.59-1.69.98l-2.49-1a.566.566 0 0 0-.18-.03c-.17 0-.34.09-.43.25l-2 3.46c-.13.22-.07.49.12.64l2.11 1.65c-.04.32-.07.65-.07.98 0 .33.03.66.07.98l-2.11 1.65c-.19.15-.24.42-.12.64l2 3.46a.5.5 0 0 0 .61.22l2.49-1c.52.4 1.08.73 1.69.98l.38 2.65c.03.24.24.42.49.42h4c.25 0 .46-.18.49-.42l.38-2.650c.61-.25 1.17-.59 1.69-.98l2.49 1c.06.02.12.03.18.03.17 0 .34-.09.43-.25l2-3.46c.12-.22.07-.49-.12-.64l-2.11-1.65zm-1.98-1.71c.04.31.05.52.05.73 0 .21-.02.43-.05.73l-.14 1.13.89.7 1.08.84-.7 1.21-1.27-.51-1.04-.42-.9.68c-.43.32-.84.56-1.25.73l-1.06.43-.16 1.13-.2 1.35h-1.4l-.19-1.35-.16-1.13-1.06-.43c-.43-.18-.83-.41-1.23-.71l-.91-.7-1.06.43-1.27.51-.7-1.21 1.08-.84.89-.7-.14-1.13c-.03-.31-.05-.54-.05-.74s.02-.43.05-.73l.14-1.13-.89-.7-1.08-.84.7-1.21 1.27.51 1.04.42.9-.68c.43-.32.84-.56 1.25-.73l1.06-.43.16-1.13.2-1.35h1.39l.19 1.35.16 1.13 1.06.43c.43.18.83.41 1.23.71l.91.7 1.06-.43 1.27-.51.7 1.21-1.07.85-.89.7.14 1.13z"/><circle cx="12" cy="12" r="3" fill="#9aa0a6"/></svg>
<div class="a" style="left:1368.3px;top:75.9px;width:3px;height:3px;background:#9aa0a6;border-radius:50%;"></div>
<div class="a" style="left:1368.3px;top:80.7px;width:3px;height:3px;background:#9aa0a6;border-radius:50%;"></div>
<div class="a" style="left:1368.3px;top:85.5px;width:3px;height:3px;background:#9aa0a6;border-radius:50%;"></div>
<svg class="a" style="left:1392px;top:76px;" width="12" height="12" viewBox="0 0 12 12"><path d="M1.5 10.5L10.5 1.5M1.5 1.5L10.5 10.5" stroke="#9aa0a6" stroke-width="1.4"/></svg>
<div class="a" style="left:712px;top:96px;width:697px;height:26px;background:#292a2d;"></div>
<div class="a" style="left:712px;top:122px;width:697px;height:1px;background:#494c50;"></div>
<svg class="a" style="left:719px;top:101px;" width="16" height="16" viewBox="0 0 16 16"><circle cx="8" cy="8" r="7" fill="none" stroke="#e46962" stroke-width="1.5"/><rect x="4.8" y="4.8" width="6.4" height="6.4" fill="#e46962"/></svg>
<svg class="a" style="left:747px;top:101px;" width="16" height="16" viewBox="0 0 16 16"><circle cx="8" cy="8" r="6.8" fill="none" stroke="#9aa0a6" stroke-width="1.4"/><path d="M3.3 12.7L12.7 3.3" stroke="#9aa0a6" stroke-width="1.4"/></svg>
<div class="a" style="left:773px;top:101px;width:1px;height:16px;background:#494c50;"></div>
<svg class="a" style="left:786px;top:103px;" width="13" height="13" viewBox="0 0 13 13"><path d="M0 0.5h13L8 6.5v6H5v-6z" fill="#7cacf8"/></svg>
<svg class="a" style="left:812px;top:101px;" width="16" height="16" viewBox="0 0 16 16"><circle cx="6.3" cy="6.3" r="4.8" fill="none" stroke="#9aa0a6" stroke-width="1.5"/><path d="M9.8 9.8L14.5 14.5" stroke="#9aa0a6" stroke-width="1.7"/></svg>
<div class="a" style="left:838px;top:101px;width:1px;height:16px;background:#494c50;"></div>
<svg class="a" style="left:849px;top:102.8px" width="12" height="12" viewBox="0 0 12 12"><rect x="0" y="0" width="12" height="12" rx="2" fill="#f5a83a"/><path d="M2.6 6.2L4.9 8.5L9.4 3.4" fill="none" stroke="#202124" stroke-width="1.5"/></svg>
<div class="t" style="left:867.50px;transform:scaleX(0.9544);top:104.10px;font-size:12px;color:#e8eaed;font-weight:normal;">Preserve log</div>
<div class="a" style="left:941px;top:101px;width:1px;height:16px;background:#494c50;"></div>
<svg class="a" style="left:952px;top:102.8px" width="12" height="12" viewBox="0 0 12 12"><rect x="0" y="0" width="12" height="12" rx="2" fill="#f5a83a"/><path d="M2.6 6.2L4.9 8.5L9.4 3.4" fill="none" stroke="#202124" stroke-width="1.5"/></svg>
<div class="t" style="left:970.30px;transform:scaleX(0.9552);top:104.10px;font-size:12px;color:#e8eaed;font-weight:normal;">Disable cache</div>
<div class="t" style="left:1053.70px;transform:scaleX(1.0540);top:104.10px;font-size:12px;color:#e8eaed;font-weight:normal;">No throttling</div>
<svg class="a" style="left:1138px;top:105px;" width="9" height="6" viewBox="0 0 9 6"><path d="M0 0h9L4.5 6z" fill="#9aa0a6"/></svg>
<svg class="a" style="left:1162px;top:101px;" width="17" height="16" viewBox="0 0 17 16"><path d="M1 5.2a10.5 10.5 0 0 1 14.5 0M3.8 8a6.5 6.5 0 0 1 7.5 -.6" fill="none" stroke="#9aa0a6" stroke-width="1.4" stroke-linecap="round"/><path d="M6.5 9.8l1.5 1.5-.2-2z" fill="#9aa0a6"/><circle cx="12.7" cy="11.6" r="2.2" fill="none" stroke="#9aa0a6" stroke-width="1.6"/><path d="M12.7 8.3v1.2M12.7 13.7v1.2M9.4 11.6h1.2M14.8 11.6h1.2M10.4 9.3l.8.8M14.2 13.1l.8.8M10.4 13.9l.8-.8M14.2 10.1l.8-.8" stroke="#9aa0a6" stroke-width="1.1"/></svg>
<div class="a" style="left:1188px;top:101px;width:1px;height:16px;background:#494c50;"></div>
<svg class="a" style="left:1200px;top:101px;" width="14" height="15" viewBox="0 0 14 15"><path d="M7 12V5.5" stroke="#9aa0a6" stroke-width="1.7"/><path d="M2.8 6.6L7 1.6L11.2 6.6Z" fill="#9aa0a6"/><path d="M1 10.3V13.3H13V10.3" fill="none" stroke="#9aa0a6" stroke-width="1.5" stroke-linejoin="round"/></svg>
<svg class="a" style="left:1228px;top:101px;" width="14" height="15" viewBox="0 0 14 15"><path d="M7 1V7.5" stroke="#9aa0a6" stroke-width="1.7"/><path d="M2.8 6.4L7 11.4L11.2 6.4Z" fill="#9aa0a6"/><path d="M1 10.3V13.3H13V10.3" fill="none" stroke="#9aa0a6" stroke-width="1.5" stroke-linejoin="round"/></svg>
<div class="a" style="left:1379px;top:101px;width:1px;height:16px;background:#494c50;"></div>
<svg class="a" style="left:1388px;top:100px;" width="19" height="19" viewBox="0 0 24 24"><path fill="#7cacf8" d="M19.14 12.94c.04-.3.06-.61.06-.94 0-.32-.02-.64-.07-.94l2.03-1.58c.18-.14.23-.41.12-.61l-1.92-3.32c-.12-.22-.37-.29-.59-.22l-2.39.96c-.5-.38-1.03-.7-1.62-.94l-.36-2.54c-.04-.24-.24-.41-.48-.41h-3.84c-.24 0-.43.17-.47.41l-.36 2.54c-.59.24-1.130.57-1.62.94l-2.39-.96c-.22-.08-.47 0-.59.22L2.74 8.87c-.12.21-.08.47.12.61l2.03 1.58c-.05.3-.09.63-.09.94s.02.64.07.94l-2.03 1.58c-.18.14-.23.41-.12.61l1.92 3.32c.12.22.37.29.59.22l2.39-.96c.5.38 1.03.7 1.62.94l.36 2.54c.05.24.24.41.48.41h3.84c.24 0 .44-.17.47-.41l.36-2.54c.59-.24 1.13-.56 1.62-.94l2.39.96c.22.08.47 0 .59-.22l1.92-3.32c.12-.22.07-.47-.12-.61l-2.01-1.58zM12 15.6c-1.98 0-3.6-1.62-3.6-3.6s1.62-3.6 3.6-3.6 3.6 1.62 3.6 3.6-1.62 3.6-3.6 3.6z"/></svg>
<div class="a" style="left:712px;top:123px;width:697px;height:72px;background:#292a2d;"></div>
<div class="a" style="left:715px;top:126px;width:163px;height:17px;background:#1e1f22;border-radius:1px;"></div>
<div class="t" style="left:718.50px;transform:scaleX(1.0123);top:129.80px;font-size:12px;color:#80868b;font-weight:normal;">Filter</div>
<div class="a" style="left:891px;top:129.5px;width:12px;height:12px;background:#333437;border:1px solid #6b6e72;border-radius:2px;"></div>
<div class="t" style="left:909.40px;transform:scaleX(0.9862);top:129.40px;font-size:12px;color:#e8eaed;font-weight:normal;">Invert</div>
<div class="a" style="left:949.5px;top:129.5px;width:12px;height:12px;background:#333437;border:1px solid #6b6e72;border-radius:2px;"></div>
<div class="t" style="left:967.50px;transform:scaleX(0.9561);top:129.40px;font-size:12px;color:#e8eaed;font-weight:normal;">Hide data URLs</div>
<div class="a" style="left:715px;top:149px;width:20px;height:20px;background:#3c3d41;border-radius:5px;"></div>
<div class="t" style="left:720.50px;transform:scaleX(0.9500);top:154.20px;font-size:12px;color:#fff;font-weight:normal;">All</div>
<div class="a" style="left:739px;top:151px;width:1px;height:16px;background:#494c50;"></div>
<div class="t" style="left:746.80px;transform:scaleX(0.9491);top:154.20px;font-size:12px;color:#e8eaed;font-weight:normal;">Fetch/XHR</div>
<div class="t" style="left:812.10px;transform:scaleX(0.9500);top:154.20px;font-size:12px;color:#e8eaed;font-weight:normal;">JS</div>
<div class="t" style="left:833.00px;transform:scaleX(0.9500);top:154.20px;font-size:12px;color:#e8eaed;font-weight:normal;">CSS</div>
<div class="t" style="left:863.70px;transform:scaleX(0.9500);top:154.20px;font-size:12px;color:#e8eaed;font-weight:normal;">Img</div>
<div class="t" style="left:894.50px;transform:scaleX(0.9851);top:154.20px;font-size:12px;color:#e8eaed;font-weight:normal;">Media</div>
<div class="t" style="left:937.30px;transform:scaleX(0.9744);top:154.20px;font-size:12px;color:#e8eaed;font-weight:normal;">Font</div>
<div class="t" style="left:971.40px;transform:scaleX(0.9500);top:154.20px;font-size:12px;color:#e8eaed;font-weight:normal;">Doc</div>
<div class="t" style="left:1002.30px;transform:scaleX(0.9500);top:154.20px;font-size:12px;color:#e8eaed;font-weight:normal;">WS</div>
<div class="t" style="left:1029.60px;transform:scaleX(0.9505);top:154.20px;font-size:12px;color:#e8eaed;font-weight:normal;">Wasm</div>
<div class="t" style="left:1072.00px;transform:scaleX(1.0053);top:154.20px;font-size:12px;color:#e8eaed;font-weight:normal;">Manifest</div>
<div class="t" style="left:1127.70px;transform:scaleX(1.0161);top:154.20px;font-size:12px;color:#e8eaed;font-weight:normal;">Other</div>
<div class="a" style="left:1173.3px;top:154px;width:12px;height:12px;background:#333437;border:1px solid #6b6e72;border-radius:2px;"></div>
<div class="t" style="left:1191.60px;transform:scaleX(0.9758);top:154.20px;font-size:12px;color:#e8eaed;font-weight:normal;">Has blocked cookies</div>
<div class="a" style="left:719px;top:177.5px;width:12px;height:12px;background:#333437;border:1px solid #6b6e72;border-radius:2px;"></div>
<div class="t" style="left:737.60px;transform:scaleX(0.9418);top:177.50px;font-size:12px;color:#e8eaed;font-weight:normal;">Blocked Requests</div>
<div class="a" style="left:839.2px;top:177.5px;width:12px;height:12px;background:#333437;border:1px solid #6b6e72;border-radius:2px;"></div>
<div class="t" style="left:857.50px;transform:scaleX(1.0032);top:177.50px;font-size:12px;color:#e8eaed;font-weight:normal;">3rd-party requests</div>
<div class="a" style="left:712px;top:195px;width:697px;height:1px;background:#494c50;"></div>
<div class="a" style="left:712px;top:196px;width:697px;height:52px;background:#292a2d;"></div>
<div class="a" style="left:719px;top:203px;width:12px;height:12px;background:#333437;border:1px solid #6b6e72;border-radius:2px;"></div>
<div class="t" style="left:737.60px;transform:scaleX(0.9717);top:204.00px;font-size:12px;color:#e8eaed;font-weight:normal;">Use large request rows</div>
<svg class="a" style="left:719px;top:229.4px" width="12" height="12" viewBox="0 0 12 12"><rect x="0" y="0" width="12" height="12" rx="2" fill="#f5a83a"/><path d="M2.6 6.2L4.9 8.5L9.4 3.4" fill="none" stroke="#202124" stroke-width="1.5"/></svg>
<div class="t" style="left:737.60px;transform:scaleX(0.9677);top:230.00px;font-size:12px;color:#e8eaed;font-weight:normal;">Show overview</div>
<div class="a" style="left:1071px;top:203.5px;width:12px;height:12px;background:#333437;border:1px solid #6b6e72;border-radius:2px;"></div>
<div class="t" style="left:1088.50px;top:204.00px;font-size:12px;color:#e8eaed;font-weight:normal;">Group by frame</div>
<div class="a" style="left:1071px;top:229.5px;width:12px;height:12px;background:#333437;border:1px solid #6b6e72;border-radius:2px;"></div>
<div class="t" style="left:1088.50px;transform:scaleX(0.9708);top:230.00px;font-size:12px;color:#e8eaed;font-weight:normal;">Capture screenshots</div>
<div class="a" style="left:712px;top:248px;width:697px;height:1px;background:#494c50;"></div>
<div class="a" style="left:712px;top:249px;width:697px;height:81px;background:#202124;"></div>
<div class="a" style="left:775px;top:249px;width:1px;height:81px;background:#3a3b3e;"></div>
<div class="t" style="left:733.30px;transform:scaleX(0.9039);top:254.70px;font-size:10px;color:#e8eaed;font-weight:normal;">10000 ms</div>
<div class="a" style="left:840px;top:249px;width:1px;height:81px;background:#3a3b3e;"></div>
<div class="t" style="left:797.52px;transform:scaleX(0.9039);top:254.70px;font-size:10px;color:#e8eaed;font-weight:normal;">20000 ms</div>
<div class="a" style="left:904px;top:249px;width:1px;height:81px;background:#3a3b3e;"></div>
<div class="t" style="left:861.74px;transform:scaleX(0.9039);top:254.70px;font-size:10px;color:#e8eaed;font-weight:normal;">30000 ms</div>
<div class="a" style="left:968px;top:249px;width:1px;height:81px;background:#3a3b3e;"></div>
<div class="t" style="left:925.96px;transform:scaleX(0.9039);top:254.70px;font-size:10px;color:#e8eaed;font-weight:normal;">40000 ms</div>
<div class="a" style="left:1032px;top:249px;width:1px;height:81px;background:#3a3b3e;"></div>
<div class="t" style="left:990.18px;transform:scaleX(0.9039);top:254.70px;font-size:10px;color:#e8eaed;font-weight:normal;">50000 ms</div>
<div class="a" style="left:1096px;top:249px;width:1px;height:81px;background:#3a3b3e;"></div>
<div class="t" style="left:1054.40px;transform:scaleX(0.9039);top:254.70px;font-size:10px;color:#e8eaed;font-weight:normal;">60000 ms</div>
<div class="a" style="left:1161px;top:249px;width:1px;height:81px;background:#3a3b3e;"></div>
<div class="t" style="left:1118.62px;transform:scaleX(0.9039);top:254.70px;font-size:10px;color:#e8eaed;font-weight:normal;">70000 ms</div>
<div class="a" style="left:1225px;top:249px;width:1px;height:81px;background:#3a3b3e;"></div>
<div class="t" style="left:1182.84px;transform:scaleX(0.9039);top:254.70px;font-size:10px;color:#e8eaed;font-weight:normal;">80000 ms</div>
<div class="a" style="left:1289px;top:249px;width:1px;height:81px;background:#3a3b3e;"></div>
<div class="t" style="left:1247.06px;transform:scaleX(0.9039);top:254.70px;font-size:10px;color:#e8eaed;font-weight:normal;">90000 ms</div>
<div class="a" style="left:1353px;top:249px;width:1px;height:81px;background:#3a3b3e;"></div>
<div class="t" style="left:1305.48px;transform:scaleX(0.9195);top:254.70px;font-size:10px;color:#e8eaed;font-weight:normal;">100000 ms</div>
<div class="t" style="left:1369.20px;transform:scaleX(0.9333);top:254.70px;font-size:10px;color:#e8eaed;font-weight:normal;">110000 ms</div>
<div class="a" style="left:712px;top:249px;width:2px;height:19px;background:#e8eaed;"></div>
<div class="a" style="left:712px;top:274px;width:3px;height:3px;background:#555;"></div>
<div class="a" style="left:716px;top:274px;width:3px;height:3px;background:#666;"></div>
<div class="a" style="left:720px;top:274px;width:3px;height:3px;background:#777;"></div>
<div class="a" style="left:727px;top:274px;width:3px;height:3px;background:#888;"></div>
<div class="a" style="left:733px;top:274px;width:3px;height:3px;background:#555;"></div>
<div class="a" style="left:738px;top:274px;width:3px;height:3px;background:#666;"></div>
<div class="a" style="left:744px;top:274px;width:3px;height:3px;background:#555;"></div>
<div class="a" style="left:750px;top:274px;width:3px;height:3px;background:#777;"></div>
<div class="a" style="left:755px;top:274px;width:3px;height:3px;background:#666;"></div>
<div class="a" style="left:721px;top:269px;width:1px;height:61px;background:#e0926c;"></div>
<div class="a" style="left:739px;top:269px;width:1px;height:61px;background:#4fc3b4;"></div>
<div class="a" style="left:914px;top:270px;width:7px;height:9px;background:#2b6bb0;"></div>
<div class="a" style="left:916px;top:272px;width:2px;height:4px;background:#aaa;"></div>
<div class="a" style="left:1134px;top:274px;width:1px;height:3px;background:#666;"></div>
<div class="a" style="left:1154px;top:274px;width:1px;height:3px;background:#666;"></div>
<div class="a" style="left:1277px;top:274px;width:1px;height:3px;background:#666;"></div>
<div class="a" style="left:1288px;top:274px;width:1px;height:3px;background:#666;"></div>
<div class="a" style="left:712px;top:329px;width:697px;height:2px;background:#3c3d40;"></div>
<div class="a" style="left:712px;top:331px;width:180px;height:26px;background:#292a2d;"></div>
<div class="t" style="left:716.30px;transform:scaleX(0.9776);top:338.50px;font-size:12px;color:#e8eaed;font-weight:normal;">Name</div>
<div class="a" style="left:712px;top:356px;width:180px;height:1px;background:#494c50;"></div>
<div class="a" style="left:892px;top:331px;width:19px;height:462px;background:#3c3d40;"></div>
<svg class="a" style="left:896.5px;top:337.5px;" width="8" height="5" viewBox="0 0 8 5"><path d="M0 5L4 0L8 5z" fill="#fff"/></svg>
<div class="a" style="left:894px;top:729px;width:13px;height:47px;background:#6a6a6a;"></div>
<svg class="a" style="left:895px;top:780px;" width="11" height="7" viewBox="0 0 11 7"><path d="M0 0L5.5 7L11 0z" fill="#888"/></svg>
<div class="a" style="left:911px;top:331px;width:498px;height:26px;background:#292a2d;"></div>
<div class="a" style="left:911px;top:356px;width:498px;height:1px;background:#494c50;"></div>
<svg class="a" style="left:922px;top:337.5px;" width="12" height="12" viewBox="0 0 12 12"><path d="M1.5 10.5L10.5 1.5M1.5 1.5L10.5 10.5" stroke="#9aa0a6" stroke-width="1.4"/></svg>
<div class="a" style="left:941px;top:331px;width:63px;height:25px;background:#000;"></div>
<div class="t" style="left:950.50px;transform:scaleX(0.9634);top:337.50px;font-size:12px;color:#fff;font-weight:normal;">Headers</div>
<div class="t" style="left:1013.40px;transform:scaleX(0.9476);top:337.50px;font-size:12px;color:#9aa0a6;font-weight:normal;">Payload</div>
<div class="t" style="left:1074.20px;transform:scaleX(0.9628);top:337.50px;font-size:12px;color:#9aa0a6;font-weight:normal;">Preview</div>
<div class="t" style="left:1134.30px;transform:scaleX(0.9325);top:337.50px;font-size:12px;color:#9aa0a6;font-weight:normal;">Response</div>
<div class="t" style="left:1204.40px;transform:scaleX(1.0518);top:337.50px;font-size:12px;color:#9aa0a6;font-weight:normal;">Initiator</div>
<div class="t" style="left:1265.50px;transform:scaleX(1.0067);top:337.50px;font-size:12px;color:#9aa0a6;font-weight:normal;">Timing</div>
<div class="t" style="left:1321.00px;transform:scaleX(0.9733);top:337.50px;font-size:12px;color:#9aa0a6;font-weight:normal;">Cookies</div>
<div class="a" style="left:1396px;top:357px;width:13px;height:460px;background:#3c3d40;"></div>
<svg class="a" style="left:1398px;top:362px;" width="10" height="6" viewBox="0 0 10 6"><path d="M0 6L5 0L10 6z" fill="#fff"/></svg>
<div class="a" style="left:1399px;top:732px;width:10px;height:52px;background:#6e6e6e;"></div>
<svg class="a" style="left:1399px;top:787px;" width="9" height="6" viewBox="0 0 9 6"><path d="M0 0L4.5 6L9 0z" fill="#888"/></svg>
<div class="a" style="left:712px;top:357px;width:180px;height:436px;background:#262626;"></div>
<div class="a" style="left:715px;top:359px;width:5px;height:8px;background:#454545;"></div>
<div class="a" style="left:720px;top:359px;width:20px;height:8px;background:#474747;"></div>
<div class="a" style="left:740px;top:359px;width:80px;height:8px;background:#676767;"></div>
<div class="a" style="left:820px;top:359px;width:20px;height:8px;background:#5c5c5c;"></div>
<div class="a" style="left:840px;top:359px;width:10px;height:8px;background:#7e7e7e;"></div>
<div class="a" style="left:850px;top:359px;width:10px;height:8px;background:#6a6a6a;"></div>
<div class="a" style="left:860px;top:359px;width:10px;height:8px;background:#5a5a5a;"></div>
<div class="a" style="left:870px;top:359px;width:10px;height:8px;background:#606060;"></div>
<div class="a" style="left:880px;top:359px;width:10px;height:8px;background:#3a3a3a;"></div>
<div class="a" style="left:715px;top:367px;width:25px;height:10px;background:#353535;"></div>
<div class="a" style="left:740px;top:367px;width:10px;height:10px;background:#3b3b3b;"></div>
<div class="a" style="left:750px;top:367px;width:10px;height:10px;background:#474747;"></div>
<div class="a" style="left:760px;top:367px;width:10px;height:10px;background:#2e2e2e;"></div>
<div class="a" style="left:770px;top:367px;width:10px;height:10px;background:#404040;"></div>
<div class="a" style="left:780px;top:367px;width:110px;height:10px;background:#2c2d2d;"></div>
<div class="a" style="left:715px;top:377px;width:5px;height:10px;background:#3c3a38;"></div>
<div class="a" style="left:720px;top:377px;width:10px;height:10px;background:#6e4d2e;"></div>
<div class="a" style="left:730px;top:377px;width:10px;height:10px;background:#3c3b3a;"></div>
<div class="a" style="left:740px;top:377px;width:60px;height:10px;background:#585858;"></div>
<div class="a" style="left:800px;top:377px;width:10px;height:10px;background:#4a4a4a;"></div>
<div class="a" style="left:810px;top:377px;width:80px;height:10px;background:#262626;"></div>
<div class="a" style="left:715px;top:387px;width:5px;height:10px;background:#363636;"></div>
<div class="a" style="left:720px;top:387px;width:10px;height:10px;background:#3e3024;"></div>
<div class="a" style="left:730px;top:387px;width:80px;height:10px;background:#353535;"></div>
<div class="a" style="left:810px;top:387px;width:80px;height:10px;background:#262626;"></div>
<div class="a" style="left:715px;top:397px;width:25px;height:10px;background:#3e3f3f;"></div>
<div class="a" style="left:740px;top:397px;width:90px;height:10px;background:#4e5050;"></div>
<div class="a" style="left:830px;top:397px;width:10px;height:10px;background:#474747;"></div>
<div class="a" style="left:840px;top:397px;width:10px;height:10px;background:#6a6a6a;"></div>
<div class="a" style="left:850px;top:397px;width:30px;height:10px;background:#4c4c4c;"></div>
<div class="a" style="left:880px;top:397px;width:10px;height:10px;background:#262626;"></div>
<div class="a" style="left:715px;top:407px;width:25px;height:10px;background:#3a3b3b;"></div>
<div class="a" style="left:740px;top:407px;width:10px;height:10px;background:#4a4a4a;"></div>
<div class="a" style="left:750px;top:407px;width:10px;height:10px;background:#5a5a5a;"></div>
<div class="a" style="left:760px;top:407px;width:10px;height:10px;background:#383838;"></div>
<div class="a" style="left:770px;top:407px;width:10px;height:10px;background:#525252;"></div>
<div class="a" style="left:780px;top:407px;width:80px;height:10px;background:#414242;"></div>
<div class="a" style="left:860px;top:407px;width:20px;height:10px;background:#383838;"></div>
<div class="a" style="left:880px;top:407px;width:10px;height:10px;background:#3a3a3a;"></div>
<div class="a" style="left:715px;top:417px;width:25px;height:10px;background:#363636;"></div>
<div class="a" style="left:740px;top:417px;width:60px;height:10px;background:#3f3f3f;"></div>
<div class="a" style="left:800px;top:417px;width:20px;height:10px;background:#4a4a4a;"></div>
<div class="a" style="left:820px;top:417px;width:10px;height:10px;background:#585858;"></div>
<div class="a" style="left:830px;top:417px;width:20px;height:10px;background:#444444;"></div>
<div class="a" style="left:850px;top:417px;width:40px;height:10px;background:#262626;"></div>
<div class="a" style="left:715px;top:427px;width:15px;height:10px;background:#363636;"></div>
<div class="a" style="left:730px;top:427px;width:30px;height:10px;background:#444444;"></div>
<div class="a" style="left:760px;top:427px;width:10px;height:10px;background:#333333;"></div>
<div class="a" style="left:770px;top:427px;width:20px;height:10px;background:#4a4a4a;"></div>
<div class="a" style="left:790px;top:427px;width:60px;height:10px;background:#414141;"></div>
<div class="a" style="left:850px;top:427px;width:40px;height:10px;background:#262626;"></div>
<div class="a" style="left:715px;top:437px;width:15px;height:10px;background:#363636;"></div>
<div class="a" style="left:730px;top:437px;width:70px;height:10px;background:#3c3c3c;"></div>
<div class="a" style="left:800px;top:437px;width:10px;height:10px;background:#474747;"></div>
<div class="a" style="left:810px;top:437px;width:10px;height:10px;background:#3c3c3c;"></div>
<div class="a" style="left:820px;top:437px;width:70px;height:10px;background:#262626;"></div>
<div class="a" style="left:715px;top:447px;width:25px;height:10px;background:#3a3a3a;"></div>
<div class="a" style="left:740px;top:447px;width:60px;height:10px;background:#5e5e5e;"></div>
<div class="a" style="left:800px;top:447px;width:20px;height:10px;background:#555555;"></div>
<div class="a" style="left:820px;top:447px;width:10px;height:10px;background:#5a5a5a;"></div>
<div class="a" style="left:830px;top:447px;width:10px;height:10px;background:#4e4e4e;"></div>
<div class="a" style="left:840px;top:447px;width:50px;height:10px;background:#262626;"></div>
<div class="a" style="left:715px;top:457px;width:5px;height:10px;background:#343434;"></div>
<div class="a" style="left:720px;top:457px;width:10px;height:10px;background:#4a3a2a;"></div>
<div class="a" style="left:730px;top:457px;width:160px;height:10px;background:#2e2e2e;"></div>
<div class="a" style="left:715px;top:467px;width:5px;height:10px;background:#3a3a3a;"></div>
<div class="a" style="left:720px;top:467px;width:10px;height:10px;background:#6e5030;"></div>
<div class="a" style="left:730px;top:467px;width:10px;height:10px;background:#3e3e3e;"></div>
<div class="a" style="left:740px;top:467px;width:110px;height:10px;background:#5e6060;"></div>
<div class="a" style="left:850px;top:467px;width:10px;height:10px;background:#4a4a4a;"></div>
<div class="a" style="left:860px;top:467px;width:10px;height:10px;background:#5a5a5a;"></div>
<div class="a" style="left:870px;top:467px;width:10px;height:10px;background:#626464;"></div>
<div class="a" style="left:880px;top:467px;width:10px;height:10px;background:#4a4a4a;"></div>
<div class="a" style="left:715px;top:477px;width:25px;height:10px;background:#363636;"></div>
<div class="a" style="left:740px;top:477px;width:50px;height:10px;background:#2a2a2a;"></div>
<div class="a" style="left:790px;top:477px;width:20px;height:10px;background:#333333;"></div>
<div class="a" style="left:810px;top:477px;width:10px;height:10px;background:#3e3e3e;"></div>
<div class="a" style="left:820px;top:477px;width:70px;height:10px;background:#2a2a2a;"></div>
<div class="a" style="left:715px;top:487px;width:25px;height:10px;background:#3c3c3c;"></div>
<div class="a" style="left:740px;top:487px;width:10px;height:10px;background:#6e6e6e;"></div>
<div class="a" style="left:750px;top:487px;width:10px;height:10px;background:#8a8a8a;"></div>
<div class="a" style="left:760px;top:487px;width:10px;height:10px;background:#5e5e5e;"></div>
<div class="a" style="left:770px;top:487px;width:10px;height:10px;background:#707070;"></div>
<div class="a" style="left:780px;top:487px;width:40px;height:10px;background:#656565;"></div>
<div class="a" style="left:820px;top:487px;width:10px;height:10px;background:#575757;"></div>
<div class="a" style="left:830px;top:487px;width:10px;height:10px;background:#4d4d4d;"></div>
<div class="a" style="left:840px;top:487px;width:30px;height:10px;background:#6a6a6a;"></div>
<div class="a" style="left:870px;top:487px;width:10px;height:10px;background:#595959;"></div>
<div class="a" style="left:880px;top:487px;width:10px;height:10px;background:#454545;"></div>
<div class="a" style="left:715px;top:497px;width:5px;height:10px;background:#2e3034;"></div>
<div class="a" style="left:720px;top:497px;width:10px;height:10px;background:#343a48;"></div>
<div class="a" style="left:730px;top:497px;width:160px;height:10px;background:#262626;"></div>
<div class="a" style="left:715px;top:507px;width:5px;height:10px;background:#3a3e44;"></div>
<div class="a" style="left:720px;top:507px;width:10px;height:10px;background:#5a6e90;"></div>
<div class="a" style="left:730px;top:507px;width:10px;height:10px;background:#4a4c50;"></div>
<div class="a" style="left:740px;top:507px;width:60px;height:10px;background:#5e5e5e;"></div>
<div class="a" style="left:800px;top:507px;width:20px;height:10px;background:#555555;"></div>
<div class="a" style="left:820px;top:507px;width:20px;height:10px;background:#6a6a6a;"></div>
<div class="a" style="left:840px;top:507px;width:10px;height:10px;background:#555555;"></div>
<div class="a" style="left:850px;top:507px;width:10px;height:10px;background:#444444;"></div>
<div class="a" style="left:860px;top:507px;width:20px;height:10px;background:#707070;"></div>
<div class="a" style="left:880px;top:507px;width:10px;height:10px;background:#333333;"></div>
<div class="a" style="left:715px;top:517px;width:5px;height:10px;background:#302c28;"></div>
<div class="a" style="left:720px;top:517px;width:10px;height:10px;background:#3a3026;"></div>
<div class="a" style="left:730px;top:517px;width:160px;height:10px;background:#2a2a2a;"></div>
<div class="a" style="left:715px;top:527px;width:5px;height:10px;background:#3a3632;"></div>
<div class="a" style="left:720px;top:527px;width:10px;height:10px;background:#6e5030;"></div>
<div class="a" style="left:730px;top:527px;width:10px;height:10px;background:#474747;"></div>
<div class="a" style="left:740px;top:527px;width:140px;height:10px;background:#6a6a6a;"></div>
<div class="a" style="left:880px;top:527px;width:10px;height:10px;background:#3a3a3a;"></div>
<div class="a" style="left:715px;top:537px;width:175px;height:10px;background:#2a2a2a;"></div>
<div class="a" style="left:820px;top:537px;width:10px;height:10px;background:#333333;"></div>
<div class="a" style="left:715px;top:547px;width:25px;height:10px;background:#3e3e3e;"></div>
<div class="a" style="left:740px;top:547px;width:70px;height:10px;background:#626262;"></div>
<div class="a" style="left:810px;top:547px;width:10px;height:10px;background:#7a7a7a;"></div>
<div class="a" style="left:820px;top:547px;width:60px;height:10px;background:#5e5e5e;"></div>
<div class="a" style="left:880px;top:547px;width:10px;height:10px;background:#333333;"></div>
<div class="a" style="left:715px;top:557px;width:175px;height:10px;background:#2a2a2a;"></div>
<div class="a" style="left:715px;top:567px;width:25px;height:10px;background:#404040;"></div>
<div class="a" style="left:740px;top:567px;width:140px;height:10px;background:#6a6a6a;"></div>
<div class="a" style="left:880px;top:567px;width:10px;height:10px;background:#333333;"></div>
<div class="a" style="left:715px;top:577px;width:55px;height:10px;background:#2e2e2e;"></div>
<div class="a" style="left:770px;top:577px;width:10px;height:10px;background:#3a3e3e;"></div>
<div class="a" style="left:780px;top:577px;width:110px;height:10px;background:#2c2c2c;"></div>
<div class="a" style="left:715px;top:587px;width:5px;height:10px;background:#3a3632;"></div>
<div class="a" style="left:720px;top:587px;width:10px;height:10px;background:#6e5030;"></div>
<div class="a" style="left:730px;top:587px;width:10px;height:10px;background:#3c3c3c;"></div>
<div class="a" style="left:740px;top:587px;width:90px;height:10px;background:#505252;"></div>
<div class="a" style="left:830px;top:587px;width:10px;height:10px;background:#606262;"></div>
<div class="a" style="left:840px;top:587px;width:30px;height:10px;background:#4c4c4c;"></div>
<div class="a" style="left:870px;top:587px;width:20px;height:10px;background:#262626;"></div>
<div class="a" style="left:715px;top:597px;width:5px;height:10px;background:#33302c;"></div>
<div class="a" style="left:720px;top:597px;width:10px;height:10px;background:#3e3024;"></div>
<div class="a" style="left:730px;top:597px;width:140px;height:10px;background:#383838;"></div>
<div class="a" style="left:870px;top:597px;width:20px;height:10px;background:#262626;"></div>
<div class="a" style="left:715px;top:607px;width:25px;height:10px;background:#3c3e3e;"></div>
<div class="a" style="left:740px;top:607px;width:140px;height:10px;background:#4e5050;"></div>
<div class="a" style="left:880px;top:607px;width:10px;height:10px;background:#2a2a2a;"></div>
<div class="a" style="left:715px;top:617px;width:25px;height:10px;background:#3a3a3a;"></div>
<div class="a" style="left:740px;top:617px;width:140px;height:10px;background:#404242;"></div>
<div class="a" style="left:880px;top:617px;width:10px;height:10px;background:#333333;"></div>
<div class="a" style="left:715px;top:627px;width:5px;height:10px;background:#36343a;"></div>
<div class="a" style="left:720px;top:627px;width:10px;height:10px;background:#4e4060;"></div>
<div class="a" style="left:730px;top:627px;width:10px;height:10px;background:#383838;"></div>
<div class="a" style="left:740px;top:627px;width:70px;height:10px;background:#464848;"></div>
<div class="a" style="left:810px;top:627px;width:80px;height:10px;background:#262626;"></div>
<div class="a" style="left:715px;top:637px;width:5px;height:10px;background:#36343a;"></div>
<div class="a" style="left:720px;top:637px;width:10px;height:10px;background:#4a3e58;"></div>
<div class="a" style="left:730px;top:637px;width:10px;height:10px;background:#383838;"></div>
<div class="a" style="left:740px;top:637px;width:30px;height:10px;background:#464646;"></div>
<div class="a" style="left:770px;top:637px;width:10px;height:10px;background:#5a5c5c;"></div>
<div class="a" style="left:780px;top:637px;width:30px;height:10px;background:#444444;"></div>
<div class="a" style="left:810px;top:637px;width:80px;height:10px;background:#262626;"></div>
<div class="a" style="left:715px;top:647px;width:25px;height:10px;background:#333333;"></div>
<div class="a" style="left:740px;top:647px;width:90px;height:10px;background:#414141;"></div>
<div class="a" style="left:830px;top:647px;width:10px;height:10px;background:#505252;"></div>
<div class="a" style="left:840px;top:647px;width:40px;height:10px;background:#3e3e3e;"></div>
<div class="a" style="left:880px;top:647px;width:10px;height:10px;background:#2e2e2e;"></div>
<div class="a" style="left:715px;top:657px;width:25px;height:10px;background:#333333;"></div>
<div class="a" style="left:740px;top:657px;width:140px;height:10px;background:#555555;"></div>
<div class="a" style="left:880px;top:657px;width:10px;height:10px;background:#2a2a2a;"></div>
<div class="a" style="left:715px;top:667px;width:175px;height:10px;background:#2a2a2a;"></div>
<div class="a" style="left:840px;top:667px;width:10px;height:10px;background:#3e3e3e;"></div>
<div class="a" style="left:715px;top:677px;width:25px;height:9px;background:#383838;"></div>
<div class="a" style="left:740px;top:677px;width:140px;height:9px;background:#5e5e5e;"></div>
<div class="a" style="left:880px;top:677px;width:10px;height:9px;background:#333333;"></div>
<div class="a" style="left:715px;top:710px;width:175px;height:7px;background:#262626;"></div>
<div class="a" style="left:715px;top:717px;width:25px;height:10px;background:#383838;"></div>
<div class="a" style="left:740px;top:717px;width:50px;height:10px;background:#5e5e5e;"></div>
<div class="a" style="left:790px;top:717px;width:10px;height:10px;background:#4a4a4a;"></div>
<div class="a" style="left:800px;top:717px;width:90px;height:10px;background:#262626;"></div>
<div class="a" style="left:715px;top:727px;width:175px;height:10px;background:#2a2a2a;"></div>
<div class="a" style="left:715px;top:737px;width:5px;height:10px;background:#333333;"></div>
<div class="a" style="left:720px;top:737px;width:10px;height:10px;background:#a0a0a0;"></div>
<div class="a" style="left:730px;top:737px;width:10px;height:10px;background:#3e3e3e;"></div>
<div class="a" style="left:740px;top:737px;width:100px;height:10px;background:#626262;"></div>
<div class="a" style="left:840px;top:737px;width:10px;height:10px;background:#5a5a5a;"></div>
<div class="a" style="left:850px;top:737px;width:10px;height:10px;background:#333333;"></div>
<div class="a" style="left:860px;top:737px;width:30px;height:10px;background:#262626;"></div>
<div class="a" style="left:715px;top:747px;width:5px;height:10px;background:#262626;"></div>
<div class="a" style="left:720px;top:747px;width:10px;height:10px;background:#22282c;"></div>
<div class="a" style="left:730px;top:747px;width:160px;height:10px;background:#262626;"></div>
<div class="a" style="left:790px;top:747px;width:10px;height:10px;background:#2e2e2e;"></div>
<div class="a" style="left:820px;top:747px;width:10px;height:10px;background:#2e2e2e;"></div>
<div class="a" style="left:715px;top:757px;width:5px;height:10px;background:#2e3438;"></div>
<div class="a" style="left:720px;top:757px;width:10px;height:10px;background:#3a5a68;"></div>
<div class="a" style="left:730px;top:757px;width:10px;height:10px;background:#3a3e42;"></div>
<div class="a" style="left:740px;top:757px;width:140px;height:10px;background:#666666;"></div>
<div class="a" style="left:880px;top:757px;width:10px;height:10px;background:#333333;"></div>
<div class="a" style="left:715px;top:767px;width:5px;height:10px;background:#262626;"></div>
<div class="a" style="left:720px;top:767px;width:10px;height:10px;background:#22303a;"></div>
<div class="a" style="left:730px;top:767px;width:160px;height:10px;background:#262626;"></div>
<div class="a" style="left:760px;top:767px;width:10px;height:10px;background:#333333;"></div>
<div class="a" style="left:715px;top:777px;width:25px;height:10px;background:#3a3a3a;"></div>
<div class="a" style="left:740px;top:777px;width:80px;height:10px;background:#5c5e5e;"></div>
<div class="a" style="left:820px;top:777px;width:10px;height:10px;background:#757575;"></div>
<div class="a" style="left:830px;top:777px;width:50px;height:10px;background:#5c5e5e;"></div>
<div class="a" style="left:880px;top:777px;width:10px;height:10px;background:#333333;"></div>
<div class="a" style="left:715px;top:787px;width:175px;height:6px;background:#303030;"></div>
<div class="a" style="left:740px;top:787px;width:20px;height:6px;background:#3a3a3a;"></div>
<div class="a" style="left:920px;top:377px;width:90px;height:10px;background:#252629;"></div>
<div class="a" style="left:1090px;top:377px;width:20px;height:10px;background:#252629;"></div>
<div class="a" style="left:920px;top:397px;width:90px;height:10px;background:#252629;"></div>
<div class="a" style="left:1090px;top:397px;width:30px;height:10px;background:#252629;"></div>
<div class="a" style="left:920px;top:417px;width:80px;height:10px;background:#252629;"></div>
<div class="a" style="left:1090px;top:417px;width:30px;height:10px;background:#252629;"></div>
<div class="a" style="left:920px;top:437px;width:70px;height:10px;background:#252629;"></div>
<div class="a" style="left:1090px;top:437px;width:70px;height:10px;background:#252629;"></div>
<div class="a" style="left:1090px;top:457px;width:220px;height:10px;background:#252629;"></div>
<div class="a" style="left:1090px;top:477px;width:170px;height:10px;background:#252629;"></div>
<div class="a" style="left:1090px;top:497px;width:170px;height:10px;background:#252629;"></div>
<div class="a" style="left:1090px;top:517px;width:290px;height:10px;background:#252629;"></div>
<div class="a" style="left:1090px;top:537px;width:290px;height:10px;background:#252629;"></div>
<div class="a" style="left:1090px;top:557px;width:290px;height:10px;background:#252629;"></div>
<div class="a" style="left:1090px;top:577px;width:200px;height:10px;background:#252629;"></div>
<div class="a" style="left:1090px;top:597px;width:200px;height:10px;background:#252629;"></div>
<div class="a" style="left:1090px;top:617px;width:300px;height:10px;background:#252629;"></div>
<div class="a" style="left:1090px;top:637px;width:290px;height:10px;background:#252629;"></div>
<div class="a" style="left:1090px;top:657px;width:290px;height:10px;background:#252629;"></div>
<div class="a" style="left:1210px;top:677px;width:170px;height:10px;background:#252629;"></div>
<div class="a" style="left:1220px;top:697px;width:160px;height:10px;background:#252629;"></div>
<div class="a" style="left:1220px;top:717px;width:120px;height:10px;background:#252629;"></div>
<div class="a" style="left:1220px;top:737px;width:10px;height:10px;background:#252629;"></div>
<div class="a" style="left:920px;top:367px;width:10px;height:10px;background:#6a6a6a;"></div>
<div class="a" style="left:930px;top:367px;width:20px;height:10px;background:#555555;"></div>
<div class="a" style="left:950px;top:367px;width:30px;height:10px;background:#5e5e5e;"></div>
<div class="a" style="left:980px;top:367px;width:10px;height:10px;background:#7a7a7a;"></div>
<div class="a" style="left:990px;top:367px;width:10px;height:10px;background:#6a6a6a;"></div>
<div class="a" style="left:1000px;top:367px;width:20px;height:10px;background:#727272;"></div>
<div class="a" style="left:1020px;top:367px;width:10px;height:10px;background:#2e2e30;"></div>
<div class="a" style="left:1090px;top:367px;width:10px;height:10px;background:#5e5e5e;"></div>
<div class="a" style="left:1100px;top:367px;width:10px;height:10px;background:#444444;"></div>
<div class="a" style="left:920px;top:387px;width:80px;height:10px;background:#656565;"></div>
<div class="a" style="left:1000px;top:387px;width:10px;height:10px;background:#303033;"></div>
<div class="a" style="left:1090px;top:387px;width:30px;height:10px;background:#646464;"></div>
<div class="a" style="left:1120px;top:387px;width:10px;height:10px;background:#444446;"></div>
<div class="a" style="left:920px;top:407px;width:90px;height:10px;background:#686868;"></div>
<div class="a" style="left:1090px;top:407px;width:20px;height:10px;background:#5e5e5e;"></div>
<div class="a" style="left:1110px;top:407px;width:10px;height:10px;background:#3c3c3e;"></div>
<div class="a" style="left:920px;top:427px;width:80px;height:10px;background:#626262;"></div>
<div class="a" style="left:1090px;top:427px;width:60px;height:10px;background:#626262;"></div>
<div class="a" style="left:1150px;top:427px;width:10px;height:10px;background:#3c3c3e;"></div>
<div class="a" style="left:920px;top:447px;width:60px;height:10px;background:#646464;"></div>
<div class="a" style="left:980px;top:447px;width:10px;height:10px;background:#303033;"></div>
<div class="a" style="left:1090px;top:447px;width:230px;height:10px;background:#656565;"></div>
<div class="a" style="left:1090px;top:467px;width:220px;height:10px;background:#646464;"></div>
<div class="a" style="left:1090px;top:487px;width:170px;height:10px;background:#616161;"></div>
<div class="a" style="left:920px;top:507px;width:70px;height:10px;background:#636363;"></div>
<div class="a" style="left:990px;top:507px;width:10px;height:10px;background:#2e2e30;"></div>
<div class="a" style="left:1090px;top:507px;width:300px;height:10px;background:#666666;"></div>
<div class="a" style="left:1390px;top:507px;width:5px;height:10px;background:#3a3a3c;"></div>
<div class="a" style="left:1090px;top:527px;width:270px;height:10px;background:#676767;"></div>
<div class="a" style="left:1360px;top:527px;width:20px;height:10px;background:#3e3e40;"></div>
<div class="a" style="left:920px;top:547px;width:80px;height:10px;background:#6a6a6a;"></div>
<div class="a" style="left:1000px;top:547px;width:10px;height:10px;background:#333336;"></div>
<div class="a" style="left:1090px;top:547px;width:170px;height:10px;background:#666666;"></div>
<div class="a" style="left:1260px;top:547px;width:30px;height:10px;background:#333436;"></div>
<div class="a" style="left:1290px;top:547px;width:70px;height:10px;background:#3a3f48;"></div>
<div class="a" style="left:1360px;top:547px;width:20px;height:10px;background:#2e2e30;"></div>
<div class="a" style="left:1090px;top:567px;width:130px;height:10px;background:#646464;"></div>
<div class="a" style="left:1220px;top:567px;width:10px;height:10px;background:#444444;"></div>
<div class="a" style="left:1240px;top:567px;width:20px;height:10px;background:#2c2e30;"></div>
<div class="a" style="left:1260px;top:567px;width:130px;height:10px;background:#3c4044;"></div>
<div class="a" style="left:1090px;top:587px;width:120px;height:10px;background:#686868;"></div>
<div class="a" style="left:1210px;top:587px;width:10px;height:10px;background:#444446;"></div>
<div class="a" style="left:1220px;top:587px;width:50px;height:10px;background:#3a3e42;"></div>
<div class="a" style="left:1270px;top:587px;width:20px;height:10px;background:#35373a;"></div>
<div class="a" style="left:1090px;top:607px;width:130px;height:10px;background:#686868;"></div>
<div class="a" style="left:1220px;top:607px;width:10px;height:10px;background:#444444;"></div>
<div class="a" style="left:1240px;top:607px;width:40px;height:10px;background:#3e4246;"></div>
<div class="a" style="left:1280px;top:607px;width:110px;height:10px;background:#3a3d40;"></div>
<div class="a" style="left:1090px;top:627px;width:120px;height:10px;background:#656565;"></div>
<div class="a" style="left:1210px;top:627px;width:10px;height:10px;background:#404042;"></div>
<div class="a" style="left:1220px;top:627px;width:10px;height:10px;background:#5e5e5e;"></div>
<div class="a" style="left:1230px;top:627px;width:50px;height:10px;background:#3a3d40;"></div>
<div class="a" style="left:1280px;top:627px;width:110px;height:10px;background:#3c3f42;"></div>
<div class="a" style="left:1090px;top:647px;width:40px;height:10px;background:#6a6a6a;"></div>
<div class="a" style="left:1130px;top:647px;width:20px;height:10px;background:#7a7a7a;"></div>
<div class="a" style="left:1150px;top:647px;width:70px;height:10px;background:#666666;"></div>
<div class="a" style="left:1220px;top:647px;width:40px;height:10px;background:#3e4246;"></div>
<div class="a" style="left:1260px;top:647px;width:50px;height:10px;background:#3a3d40;"></div>
<div class="a" style="left:1320px;top:647px;width:60px;height:10px;background:#3e4144;"></div>
<div class="a" style="left:1090px;top:667px;width:50px;height:10px;background:#636363;"></div>
<div class="a" style="left:1140px;top:667px;width:10px;height:10px;background:#404042;"></div>
<div class="a" style="left:1210px;top:667px;width:10px;height:10px;background:#5e5e5e;"></div>
<div class="a" style="left:1220px;top:667px;width:40px;height:10px;background:#3e4246;"></div>
<div class="a" style="left:1260px;top:667px;width:50px;height:10px;background:#3c4043;"></div>
<div class="a" style="left:1320px;top:667px;width:60px;height:10px;background:#3e4144;"></div>
<div class="a" style="left:1210px;top:687px;width:10px;height:10px;background:#333436;"></div>
<div class="a" style="left:1220px;top:687px;width:40px;height:10px;background:#3c4044;"></div>
<div class="a" style="left:1260px;top:687px;width:50px;height:10px;background:#3a3e42;"></div>
<div class="a" style="left:1320px;top:687px;width:50px;height:10px;background:#404346;"></div>
<div class="a" style="left:1370px;top:687px;width:10px;height:10px;background:#2e2f31;"></div>
<div class="a" style="left:1220px;top:707px;width:40px;height:10px;background:#3c4044;"></div>
<div class="a" style="left:1260px;top:707px;width:50px;height:10px;background:#383b3e;"></div>
<div class="a" style="left:1320px;top:707px;width:50px;height:10px;background:#404346;"></div>
<div class="a" style="left:1370px;top:707px;width:10px;height:10px;background:#2e2f31;"></div>
<div class="a" style="left:1220px;top:727px;width:40px;height:10px;background:#3c4044;"></div>
<div class="a" style="left:1260px;top:727px;width:70px;height:10px;background:#3a3d40;"></div>
<div class="a" style="left:1330px;top:727px;width:10px;height:10px;background:#2e2f31;"></div>
<div class="a" style="left:1220px;top:747px;width:10px;height:10px;background:#333538;"></div>
<div class="a" style="left:920px;top:808px;width:90px;height:9px;background:#4e4e4e;"></div>
<div class="a" style="left:1090px;top:808px;width:10px;height:9px;background:#3c3c3e;"></div>
<div class="a" style="left:712px;top:688px;width:180px;height:21px;background:#3e3e3e;"></div>
<div class="a" style="left:718px;top:694px;width:12px;height:12px;background:transparent;border:1.5px solid #7e7e7e;border-radius:2px;"></div>
<div class="t" style="left:735.80px;top:694.10px;font-size:12px;color:#e8eaed;font-weight:normal;">Mutate?authuser=2&amp;acx-v-...</div>
<div class="a" style="left:712px;top:793px;width:199px;height:1px;background:#494c50;"></div>
<div class="a" style="left:712px;top:794px;width:199px;height:23px;background:#292a2d;"></div>
<div class="t" style="left:722.70px;transform:scaleX(0.9627);top:802.40px;font-size:12px;color:#9aa0a6;font-weight:normal;">197 requests</div>
<div class="a" style="left:799px;top:799px;width:1px;height:16px;background:#494c50;"></div>
<div class="t" style="left:808.60px;transform:scaleX(0.9781);top:802.40px;font-size:12px;color:#9aa0a6;font-weight:normal;">8.4 MB transferred</div>
<div class="a" style="left:913px;top:759.5px;width:393px;height:46px;background:transparent;border:3px solid #e60000;border-radius:3px;"></div>
<div class="t" style="left:919.00px;transform:scaleX(0.9833);top:766.40px;font-size:12px;color:#e8eaed;font-weight:normal;">X-Framework-Xsrf-Token:</div>
<div class="t" style="left:1091.20px;transform:scaleX(0.9560);top:766.40px;font-size:12px;color:#e8eaed;font-weight:normal;">AGngLz0hZUD51Z6rHWiLyZ4PAtUPuG-</div>
<div class="t" style="left:1091.20px;transform:scaleX(0.9562);top:786.40px;font-size:12px;color:#e8eaed;font-weight:normal;">sWg:1688030476761</div>
<svg class="a" style="left:1080px;top:65px;" width="72" height="26" viewBox="0 0 72 26"><path d="M5.8 13.1L19 5.5L17.7 10L66 12L66 14.2L17.7 16.5L19 21Z" fill="#ee0000" stroke="#ee0000" stroke-width="2" stroke-linejoin="round"/></svg>
<svg class="a" style="left:995px;top:300px;" width="60" height="40" viewBox="0 0 60 40"><path d="M7.2 32.5L17.6 19.6L17.6 24.3L56 8.9L56.5 10L21.4 30L24.3 33Z" fill="#ee0000" stroke="#ee0000" stroke-width="2" stroke-linejoin="round"/></svg>
<svg class="a" style="left:685px;top:640px;" width="50" height="56" viewBox="0 0 50 56"><path d="M9.9 8.8L40 38.5L41.9 34.9L45.9 50.7L30.5 44L34.1 43L9 9.6Z" fill="#ee0000" stroke="#ee0000" stroke-width="2" stroke-linejoin="round"/></svg>
</body></html>
